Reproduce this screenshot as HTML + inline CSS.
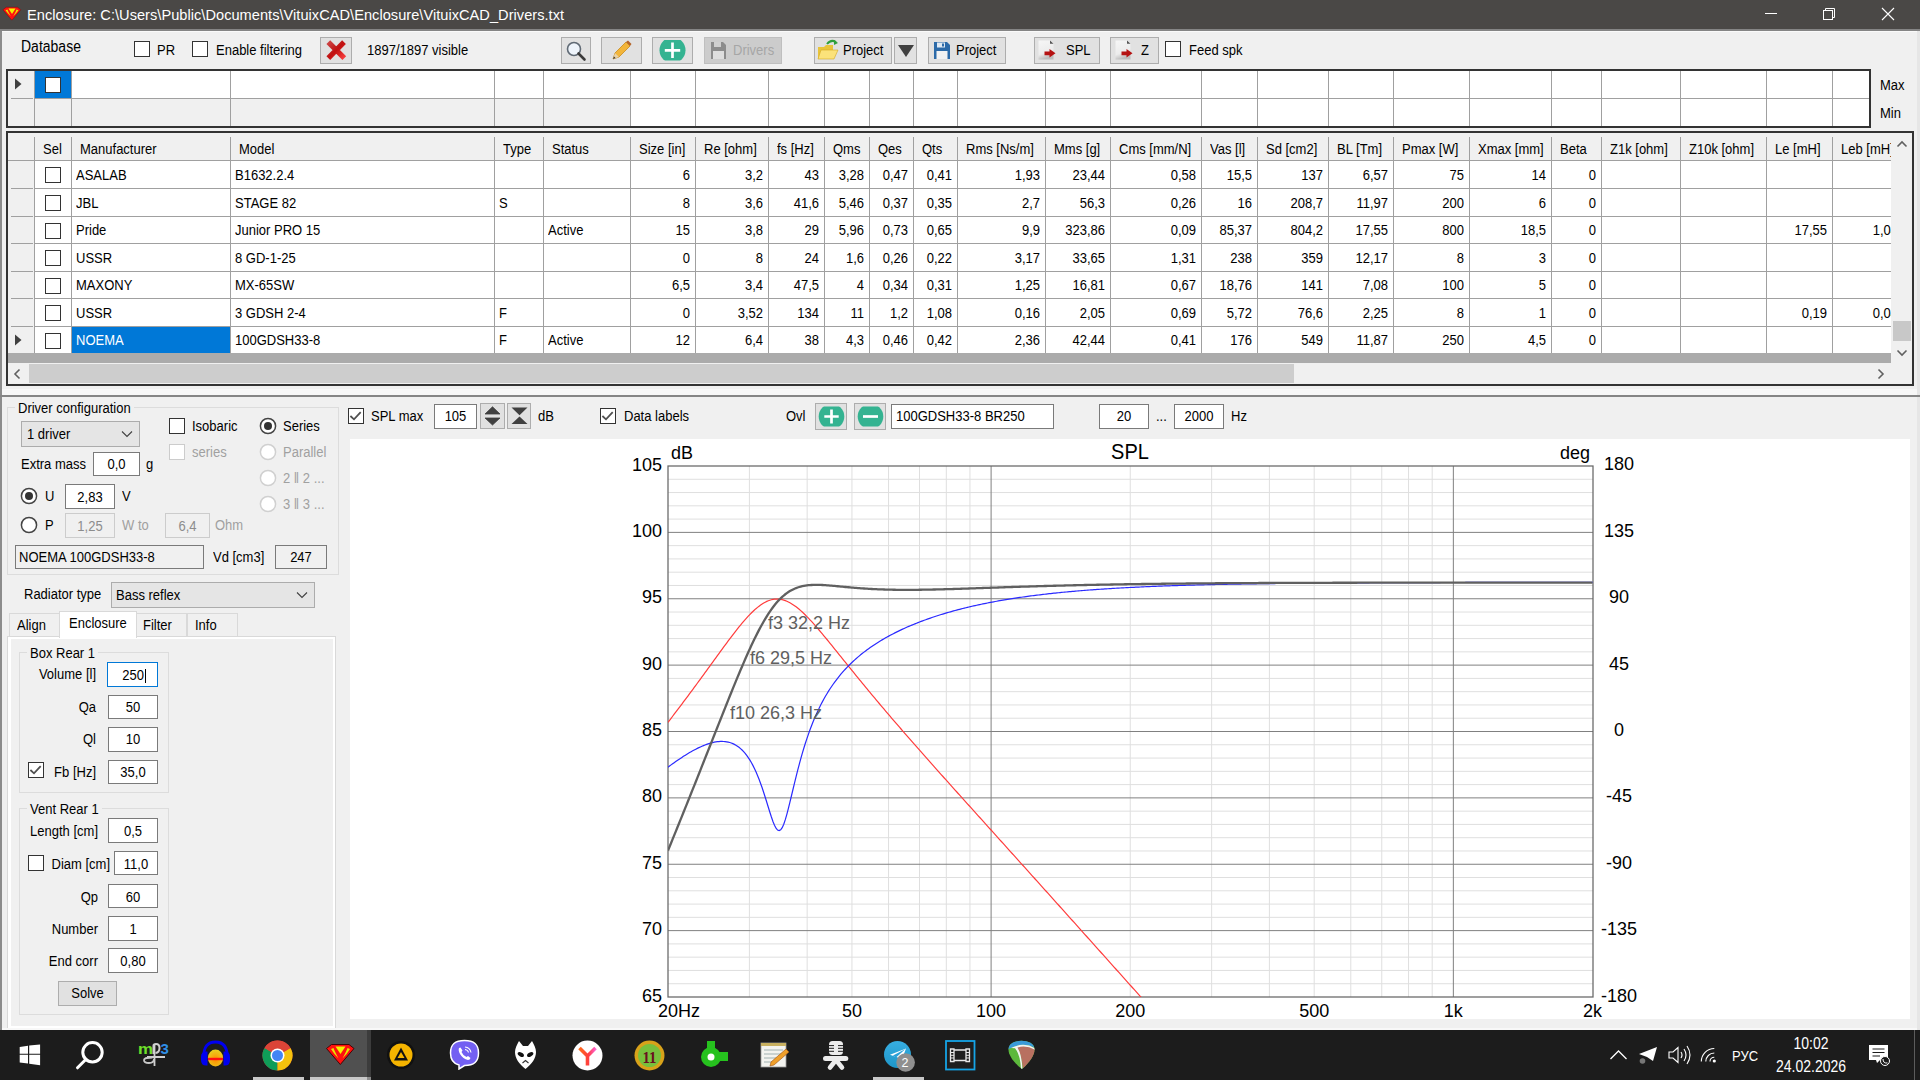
<!DOCTYPE html>
<html><head><meta charset="utf-8"><style>
html,body{margin:0;padding:0;width:1920px;height:1080px;overflow:hidden;background:#f0f0f0;}
.r{position:absolute;box-sizing:border-box;}
.t{position:absolute;white-space:nowrap;font-family:"Liberation Sans",sans-serif;}
</style></head><body>
<div class="r" style="left:0;top:0;width:1920px;height:29px;background:#4a4846"></div>
<div class="r" style="left:0;top:29px;width:1920px;height:2px;background:#858585"></div>
<svg class="r" style="left:2px;top:6px" width="20" height="16" viewBox="0 0 31 24"><path d="M1.5 5.5 L6.5 1.5 H24 L29 5.5 L15.3 21.5 Z" fill="#ff1010" stroke="#6a0000" stroke-width="0.6" stroke-linejoin="round"/><path d="M10 3.5 H21 L15.5 12 Z" fill="#f2f200"/><path d="M5.5 6 Q9 11 13.5 15.5 Q9.5 8 8.5 5 Z M25.5 6 Q22 11 17.5 15.5 Q21.5 8 22.5 5 Z" fill="#e6e600"/></svg>
<div class="t" style="left:27px;top:8px;font-size:14.6px;line-height:14.6px;color:#ffffff;transform:scaleY(1.02);transform-origin:0 12px;letter-spacing:0.03px">Enclosure: C:\Users\Public\Documents\VituixCAD\Enclosure\VituixCAD_Drivers.txt</div>
<div class="r" style="left:1765px;top:13px;width:12px;height:1px;background:#fff;"></div>
<svg class="r" style="left:1820px;top:5px" width="20" height="20"><rect x="3.5" y="5.5" width="9" height="9" fill="none" stroke="#fff" stroke-width="1"/><path d="M5.5 5.5 V3.5 H14.5 V12.5 H12.5" fill="none" stroke="#fff" stroke-width="1"/></svg>
<svg class="r" style="left:1880px;top:6px" width="16" height="16"><path d="M2 2 L14 14 M14 2 L2 14" stroke="#fff" stroke-width="1.1"/></svg>
<div class="r" style="left:0px;top:31px;width:2px;height:999px;background:#8c8c8c;"></div>
<div class="r" style="left:1917px;top:31px;width:3px;height:999px;background:#e6e6e6;"></div>
<div class="r" style="left:2px;top:31px;width:1915px;height:1px;background:#fafafa;"></div>
<div class="t" style="left:21px;top:40px;font-size:14px;line-height:14px;color:#000;transform:scaleY(1.16);transform-origin:0 12px;">Database</div>
<div class="r" style="left:134px;top:41px;width:16px;height:16px;background:#fff;border:1px solid #333333;"></div>
<div class="t" style="left:157px;top:44px;font-size:13px;line-height:13px;color:#000;transform:scaleY(1.16);transform-origin:0 11px;">PR</div>
<div class="r" style="left:192px;top:41px;width:16px;height:16px;background:#fff;border:1px solid #333333;"></div>
<div class="t" style="left:216px;top:44px;font-size:13px;line-height:13px;color:#000;transform:scaleY(1.16);transform-origin:0 11px;">Enable filtering</div>
<div class="r" style="left:320px;top:37px;width:32px;height:27px;background:#e1e1e1;border:1px solid #adadad;"></div>
<svg class="r" style="left:320px;top:37px" width="32" height="27"><defs><linearGradient id="xg" x1="0" y1="0" x2="1" y2="1"><stop offset="0" stop-color="#cc4444"/><stop offset="0.5" stop-color="#c01010"/><stop offset="1" stop-color="#f84040"/></linearGradient></defs><path d="M8.3 5.2 L24.3 21.1 M24 5.2 L8.3 21.1" stroke="url(#xg)" stroke-width="5.3"/></svg>
<div class="t" style="left:367px;top:44px;font-size:13px;line-height:13px;color:#000;transform:scaleY(1.16);transform-origin:0 11px;">1897/1897 visible</div>
<div class="r" style="left:561px;top:37px;width:30px;height:27px;background:#e1e1e1;border:1px solid #adadad;"></div>
<svg class="r" style="left:565px;top:40px" width="22" height="22"><circle cx="9" cy="9" r="6.5" fill="#eef4fb" stroke="#606a75" stroke-width="1.6"/><path d="M13.5 13.5 L19.5 19.5" stroke="#3a3a3a" stroke-width="2.6" stroke-linecap="round"/></svg>
<div class="r" style="left:601px;top:37px;width:41px;height:27px;background:#e1e1e1;border:1px solid #adadad;"></div>
<svg class="r" style="left:609px;top:39px" width="24" height="24"><path d="M4 20 L6 14 L17 3 L21 7 L10 18 Z" fill="#f2b53a" stroke="#c98a1c" stroke-width="0.8"/><path d="M17 3 L19 1.5 L22.5 5 L21 7 Z" fill="#b5652a"/><path d="M4 20 L6 14 L10 18 Z" fill="#e8d2a8"/><path d="M4 20 L5 17.5 L6.5 19 Z" fill="#333"/></svg>
<div class="r" style="left:652px;top:37px;width:41px;height:27px;background:#e1e1e1;border:1px solid #adadad;"></div>
<svg class="r" style="left:659px;top:40px" width="27" height="21"><defs><clipPath id="pcl"><rect x="0" y="0" width="27" height="20.5"/></clipPath></defs><circle cx="13.5" cy="10.2" r="13" fill="#34b391" clip-path="url(#pcl)"/><path d="M13.5 2.6 V18 M5.8 10.3 H21.2" stroke="#fff" stroke-width="2.7"/></svg>
<div class="r" style="left:704px;top:37px;width:78px;height:27px;background:#cccccc;border:1px solid #bfbfbf;"></div>
<svg class="r" style="left:710px;top:41px" width="17" height="19"><path d="M1 1 H13 L16 4 V18 H1 Z" fill="#8c8c8c"/><rect x="4" y="1" width="7" height="5" fill="#cfcfcf"/><rect x="3" y="10" width="11" height="8" fill="#dedede"/></svg>
<div class="t" style="left:733px;top:44px;font-size:13px;line-height:13px;color:#a6a6a6;transform:scaleY(1.16);transform-origin:0 11px;">Drivers</div>
<div class="r" style="left:814px;top:37px;width:78px;height:27px;background:#e1e1e1;border:1px solid #adadad;"></div>
<svg class="r" style="left:816px;top:39px" width="24" height="22"><path d="M2 8 H8 L10 6 H17 V20 H2 Z" fill="#e8c43a"/><path d="M2 20 L5 11 H22 L18 20 Z" fill="#fbe27a" stroke="#d4a820" stroke-width="0.6"/><path d="M11 5 Q15 0 20 3" fill="none" stroke="#2f9e3a" stroke-width="2"/><path d="M18 1 L22 4 L18 6 Z" fill="#2f9e3a"/></svg>
<div class="t" style="left:843px;top:44px;font-size:13px;line-height:13px;color:#000;transform:scaleY(1.16);transform-origin:0 11px;">Project</div>
<div class="r" style="left:894px;top:37px;width:23px;height:27px;background:#e1e1e1;border:1px solid #adadad;"></div>
<svg class="r" style="left:897px;top:44px" width="18" height="14"><path d="M1 1 H17 L9 13 Z" fill="#404040"/></svg>
<div class="r" style="left:928px;top:37px;width:78px;height:27px;background:#e1e1e1;border:1px solid #adadad;"></div>
<svg class="r" style="left:933px;top:41px" width="18" height="19"><path d="M1 1 H14 L17 4 V18 H1 Z" fill="#2c6aa8"/><rect x="4" y="1.5" width="8" height="5" fill="#dfe9f3"/><rect x="9" y="2.5" width="2" height="3" fill="#2c6aa8"/><rect x="3.5" y="10" width="11" height="8" fill="#f2f2f2"/></svg>
<div class="t" style="left:956px;top:44px;font-size:13px;line-height:13px;color:#000;transform:scaleY(1.16);transform-origin:0 11px;">Project</div>
<div class="r" style="left:1034px;top:37px;width:66px;height:27px;background:#e1e1e1;border:1px solid #adadad;"></div>
<svg class="r" style="left:1038px;top:40px" width="20" height="21"><defs><linearGradient id="pg1" x1="0" y1="0" x2="0.3" y2="1"><stop offset="0" stop-color="#f6f6f6"/><stop offset="0.7" stop-color="#ececec"/><stop offset="1" stop-color="#bdbdbd"/></linearGradient></defs><path d="M0.5 0.5 H12.5 L15.5 3.5 V19.5 H0.5 Z" fill="url(#pg1)"/><path d="M12 0.5 L15.5 3.8 H12 Z" fill="#555"/><path d="M6.5 11.5 H11.5 V9 L17.5 13.3 L11.5 17.6 V15.2 H6.5 Z" fill="#b51212"/></svg>
<div class="t" style="left:1066px;top:44px;font-size:13px;line-height:13px;color:#000;transform:scaleY(1.16);transform-origin:0 11px;">SPL</div>
<div class="r" style="left:1110px;top:37px;width:49px;height:27px;background:#e1e1e1;border:1px solid #adadad;"></div>
<svg class="r" style="left:1115px;top:40px" width="20" height="21"><defs><linearGradient id="pg2" x1="0" y1="0" x2="0.3" y2="1"><stop offset="0" stop-color="#f6f6f6"/><stop offset="0.7" stop-color="#ececec"/><stop offset="1" stop-color="#bdbdbd"/></linearGradient></defs><path d="M0.5 0.5 H12.5 L15.5 3.5 V19.5 H0.5 Z" fill="url(#pg2)"/><path d="M12 0.5 L15.5 3.8 H12 Z" fill="#555"/><path d="M6.5 11.5 H11.5 V9 L17.5 13.3 L11.5 17.6 V15.2 H6.5 Z" fill="#b51212"/></svg>
<div class="t" style="left:1141px;top:44px;font-size:13px;line-height:13px;color:#000;transform:scaleY(1.16);transform-origin:0 11px;">Z</div>
<div class="r" style="left:1165px;top:41px;width:16px;height:16px;background:#fff;border:1px solid #333333;"></div>
<div class="t" style="left:1189px;top:44px;font-size:13px;line-height:13px;color:#000;transform:scaleY(1.16);transform-origin:0 11px;">Feed spk</div>
<div class="r" style="left:6px;top:69px;width:1865px;height:59px;background:#ffffff;border:2px solid #333;"></div>
<div class="r" style="left:8px;top:71px;width:26px;height:55px;background:#f0f0f0;"></div>
<div class="r" style="left:35px;top:99px;width:595px;height:27px;background:#f0f0f0;"></div>
<div class="r" style="left:35px;top:71px;width:36px;height:27px;background:#0078d7;"></div>
<div class="r" style="left:34px;top:71px;width:1px;height:55px;background:#a0a0a0;"></div>
<div class="r" style="left:71px;top:71px;width:1px;height:55px;background:#a0a0a0;"></div>
<div class="r" style="left:230px;top:71px;width:1px;height:55px;background:#a0a0a0;"></div>
<div class="r" style="left:494px;top:71px;width:1px;height:55px;background:#a0a0a0;"></div>
<div class="r" style="left:543px;top:71px;width:1px;height:55px;background:#a0a0a0;"></div>
<div class="r" style="left:630px;top:71px;width:1px;height:55px;background:#a0a0a0;"></div>
<div class="r" style="left:695px;top:71px;width:1px;height:55px;background:#a0a0a0;"></div>
<div class="r" style="left:768px;top:71px;width:1px;height:55px;background:#a0a0a0;"></div>
<div class="r" style="left:824px;top:71px;width:1px;height:55px;background:#a0a0a0;"></div>
<div class="r" style="left:869px;top:71px;width:1px;height:55px;background:#a0a0a0;"></div>
<div class="r" style="left:913px;top:71px;width:1px;height:55px;background:#a0a0a0;"></div>
<div class="r" style="left:957px;top:71px;width:1px;height:55px;background:#a0a0a0;"></div>
<div class="r" style="left:1045px;top:71px;width:1px;height:55px;background:#a0a0a0;"></div>
<div class="r" style="left:1110px;top:71px;width:1px;height:55px;background:#a0a0a0;"></div>
<div class="r" style="left:1201px;top:71px;width:1px;height:55px;background:#a0a0a0;"></div>
<div class="r" style="left:1257px;top:71px;width:1px;height:55px;background:#a0a0a0;"></div>
<div class="r" style="left:1328px;top:71px;width:1px;height:55px;background:#a0a0a0;"></div>
<div class="r" style="left:1393px;top:71px;width:1px;height:55px;background:#a0a0a0;"></div>
<div class="r" style="left:1469px;top:71px;width:1px;height:55px;background:#a0a0a0;"></div>
<div class="r" style="left:1551px;top:71px;width:1px;height:55px;background:#a0a0a0;"></div>
<div class="r" style="left:1601px;top:71px;width:1px;height:55px;background:#a0a0a0;"></div>
<div class="r" style="left:1680px;top:71px;width:1px;height:55px;background:#a0a0a0;"></div>
<div class="r" style="left:1766px;top:71px;width:1px;height:55px;background:#a0a0a0;"></div>
<div class="r" style="left:1832px;top:71px;width:1px;height:55px;background:#a0a0a0;"></div>
<div class="r" style="left:35px;top:98px;width:1834px;height:1px;background:#a0a0a0;"></div>
<div class="r" style="left:11px;top:98px;width:22px;height:1px;background:#a0a0a0;"></div>
<svg class="r" style="left:14px;top:78px" width="9" height="13"><path d="M1 0.5 L7.5 6 L1 11.5 Z" fill="#404040"/></svg>
<div class="r" style="left:45px;top:77px;width:16px;height:16px;background:#fff;border:1px solid #333333;"></div>
<div class="t" style="left:1880px;top:79px;font-size:13px;line-height:13px;color:#000;transform:scaleY(1.16);transform-origin:0 11px;">Max</div>
<div class="t" style="left:1880px;top:107px;font-size:13px;line-height:13px;color:#000;transform:scaleY(1.16);transform-origin:0 11px;">Min</div>
<div class="r" style="left:6px;top:131px;width:1908px;height:255px;background:#ffffff;border:2px solid #333;"></div>
<div class="r" style="left:8px;top:133px;width:1883px;height:27px;background:#f0f0f0;"></div>
<div class="r" style="left:8px;top:161px;width:26px;height:192px;background:#f0f0f0;"></div>
<div class="r" style="left:8px;top:160px;width:1883px;height:1px;background:#a0a0a0;"></div>
<div class="r" style="left:72px;top:327px;width:158px;height:26px;background:#0078d7;"></div>
<div class="r" style="left:35px;top:188px;width:1856px;height:1px;background:#a0a0a0;"></div>
<div class="r" style="left:11px;top:188px;width:22px;height:1px;background:#a0a0a0;"></div>
<div class="r" style="left:35px;top:216px;width:1856px;height:1px;background:#a0a0a0;"></div>
<div class="r" style="left:11px;top:216px;width:22px;height:1px;background:#a0a0a0;"></div>
<div class="r" style="left:35px;top:243px;width:1856px;height:1px;background:#a0a0a0;"></div>
<div class="r" style="left:11px;top:243px;width:22px;height:1px;background:#a0a0a0;"></div>
<div class="r" style="left:35px;top:271px;width:1856px;height:1px;background:#a0a0a0;"></div>
<div class="r" style="left:11px;top:271px;width:22px;height:1px;background:#a0a0a0;"></div>
<div class="r" style="left:35px;top:298px;width:1856px;height:1px;background:#a0a0a0;"></div>
<div class="r" style="left:11px;top:298px;width:22px;height:1px;background:#a0a0a0;"></div>
<div class="r" style="left:35px;top:326px;width:1856px;height:1px;background:#a0a0a0;"></div>
<div class="r" style="left:11px;top:326px;width:22px;height:1px;background:#a0a0a0;"></div>
<div class="r" style="left:34px;top:137px;width:1px;height:23px;background:#a0a0a0;"></div>
<div class="r" style="left:34px;top:161px;width:1px;height:192px;background:#a0a0a0;"></div>
<div class="r" style="left:71px;top:137px;width:1px;height:23px;background:#a0a0a0;"></div>
<div class="r" style="left:71px;top:161px;width:1px;height:192px;background:#a0a0a0;"></div>
<div class="r" style="left:230px;top:137px;width:1px;height:23px;background:#a0a0a0;"></div>
<div class="r" style="left:230px;top:161px;width:1px;height:192px;background:#a0a0a0;"></div>
<div class="r" style="left:494px;top:137px;width:1px;height:23px;background:#a0a0a0;"></div>
<div class="r" style="left:494px;top:161px;width:1px;height:192px;background:#a0a0a0;"></div>
<div class="r" style="left:543px;top:137px;width:1px;height:23px;background:#a0a0a0;"></div>
<div class="r" style="left:543px;top:161px;width:1px;height:192px;background:#a0a0a0;"></div>
<div class="r" style="left:630px;top:137px;width:1px;height:23px;background:#a0a0a0;"></div>
<div class="r" style="left:630px;top:161px;width:1px;height:192px;background:#a0a0a0;"></div>
<div class="r" style="left:695px;top:137px;width:1px;height:23px;background:#a0a0a0;"></div>
<div class="r" style="left:695px;top:161px;width:1px;height:192px;background:#a0a0a0;"></div>
<div class="r" style="left:768px;top:137px;width:1px;height:23px;background:#a0a0a0;"></div>
<div class="r" style="left:768px;top:161px;width:1px;height:192px;background:#a0a0a0;"></div>
<div class="r" style="left:824px;top:137px;width:1px;height:23px;background:#a0a0a0;"></div>
<div class="r" style="left:824px;top:161px;width:1px;height:192px;background:#a0a0a0;"></div>
<div class="r" style="left:869px;top:137px;width:1px;height:23px;background:#a0a0a0;"></div>
<div class="r" style="left:869px;top:161px;width:1px;height:192px;background:#a0a0a0;"></div>
<div class="r" style="left:913px;top:137px;width:1px;height:23px;background:#a0a0a0;"></div>
<div class="r" style="left:913px;top:161px;width:1px;height:192px;background:#a0a0a0;"></div>
<div class="r" style="left:957px;top:137px;width:1px;height:23px;background:#a0a0a0;"></div>
<div class="r" style="left:957px;top:161px;width:1px;height:192px;background:#a0a0a0;"></div>
<div class="r" style="left:1045px;top:137px;width:1px;height:23px;background:#a0a0a0;"></div>
<div class="r" style="left:1045px;top:161px;width:1px;height:192px;background:#a0a0a0;"></div>
<div class="r" style="left:1110px;top:137px;width:1px;height:23px;background:#a0a0a0;"></div>
<div class="r" style="left:1110px;top:161px;width:1px;height:192px;background:#a0a0a0;"></div>
<div class="r" style="left:1201px;top:137px;width:1px;height:23px;background:#a0a0a0;"></div>
<div class="r" style="left:1201px;top:161px;width:1px;height:192px;background:#a0a0a0;"></div>
<div class="r" style="left:1257px;top:137px;width:1px;height:23px;background:#a0a0a0;"></div>
<div class="r" style="left:1257px;top:161px;width:1px;height:192px;background:#a0a0a0;"></div>
<div class="r" style="left:1328px;top:137px;width:1px;height:23px;background:#a0a0a0;"></div>
<div class="r" style="left:1328px;top:161px;width:1px;height:192px;background:#a0a0a0;"></div>
<div class="r" style="left:1393px;top:137px;width:1px;height:23px;background:#a0a0a0;"></div>
<div class="r" style="left:1393px;top:161px;width:1px;height:192px;background:#a0a0a0;"></div>
<div class="r" style="left:1469px;top:137px;width:1px;height:23px;background:#a0a0a0;"></div>
<div class="r" style="left:1469px;top:161px;width:1px;height:192px;background:#a0a0a0;"></div>
<div class="r" style="left:1551px;top:137px;width:1px;height:23px;background:#a0a0a0;"></div>
<div class="r" style="left:1551px;top:161px;width:1px;height:192px;background:#a0a0a0;"></div>
<div class="r" style="left:1601px;top:137px;width:1px;height:23px;background:#a0a0a0;"></div>
<div class="r" style="left:1601px;top:161px;width:1px;height:192px;background:#a0a0a0;"></div>
<div class="r" style="left:1680px;top:137px;width:1px;height:23px;background:#a0a0a0;"></div>
<div class="r" style="left:1680px;top:161px;width:1px;height:192px;background:#a0a0a0;"></div>
<div class="r" style="left:1766px;top:137px;width:1px;height:23px;background:#a0a0a0;"></div>
<div class="r" style="left:1766px;top:161px;width:1px;height:192px;background:#a0a0a0;"></div>
<div class="r" style="left:1832px;top:137px;width:1px;height:23px;background:#a0a0a0;"></div>
<div class="r" style="left:1832px;top:161px;width:1px;height:192px;background:#a0a0a0;"></div>
<div class="r" style="left:0px;top:0px;width:1891px;height:361px;overflow:hidden">
<div class="t" style="left:43px;top:143px;font-size:13px;line-height:13px;color:#000;transform:scaleY(1.16);transform-origin:0 11px;">Sel</div>
<div class="t" style="left:80px;top:143px;font-size:13px;line-height:13px;color:#000;transform:scaleY(1.16);transform-origin:0 11px;">Manufacturer</div>
<div class="t" style="left:239px;top:143px;font-size:13px;line-height:13px;color:#000;transform:scaleY(1.16);transform-origin:0 11px;">Model</div>
<div class="t" style="left:503px;top:143px;font-size:13px;line-height:13px;color:#000;transform:scaleY(1.16);transform-origin:0 11px;">Type</div>
<div class="t" style="left:552px;top:143px;font-size:13px;line-height:13px;color:#000;transform:scaleY(1.16);transform-origin:0 11px;">Status</div>
<div class="t" style="left:639px;top:143px;font-size:13px;line-height:13px;color:#000;transform:scaleY(1.16);transform-origin:0 11px;">Size [in]</div>
<div class="t" style="left:704px;top:143px;font-size:13px;line-height:13px;color:#000;transform:scaleY(1.16);transform-origin:0 11px;">Re [ohm]</div>
<div class="t" style="left:777px;top:143px;font-size:13px;line-height:13px;color:#000;transform:scaleY(1.16);transform-origin:0 11px;">fs [Hz]</div>
<div class="t" style="left:833px;top:143px;font-size:13px;line-height:13px;color:#000;transform:scaleY(1.16);transform-origin:0 11px;">Qms</div>
<div class="t" style="left:878px;top:143px;font-size:13px;line-height:13px;color:#000;transform:scaleY(1.16);transform-origin:0 11px;">Qes</div>
<div class="t" style="left:922px;top:143px;font-size:13px;line-height:13px;color:#000;transform:scaleY(1.16);transform-origin:0 11px;">Qts</div>
<div class="t" style="left:966px;top:143px;font-size:13px;line-height:13px;color:#000;transform:scaleY(1.16);transform-origin:0 11px;">Rms [Ns/m]</div>
<div class="t" style="left:1054px;top:143px;font-size:13px;line-height:13px;color:#000;transform:scaleY(1.16);transform-origin:0 11px;">Mms [g]</div>
<div class="t" style="left:1119px;top:143px;font-size:13px;line-height:13px;color:#000;transform:scaleY(1.16);transform-origin:0 11px;">Cms [mm/N]</div>
<div class="t" style="left:1210px;top:143px;font-size:13px;line-height:13px;color:#000;transform:scaleY(1.16);transform-origin:0 11px;">Vas [l]</div>
<div class="t" style="left:1266px;top:143px;font-size:13px;line-height:13px;color:#000;transform:scaleY(1.16);transform-origin:0 11px;">Sd [cm2]</div>
<div class="t" style="left:1337px;top:143px;font-size:13px;line-height:13px;color:#000;transform:scaleY(1.16);transform-origin:0 11px;">BL [Tm]</div>
<div class="t" style="left:1402px;top:143px;font-size:13px;line-height:13px;color:#000;transform:scaleY(1.16);transform-origin:0 11px;">Pmax [W]</div>
<div class="t" style="left:1478px;top:143px;font-size:13px;line-height:13px;color:#000;transform:scaleY(1.16);transform-origin:0 11px;">Xmax [mm]</div>
<div class="t" style="left:1560px;top:143px;font-size:13px;line-height:13px;color:#000;transform:scaleY(1.16);transform-origin:0 11px;">Beta</div>
<div class="t" style="left:1610px;top:143px;font-size:13px;line-height:13px;color:#000;transform:scaleY(1.16);transform-origin:0 11px;">Z1k [ohm]</div>
<div class="t" style="left:1689px;top:143px;font-size:13px;line-height:13px;color:#000;transform:scaleY(1.16);transform-origin:0 11px;">Z10k [ohm]</div>
<div class="t" style="left:1775px;top:143px;font-size:13px;line-height:13px;color:#000;transform:scaleY(1.16);transform-origin:0 11px;">Le [mH]</div>
<div class="t" style="left:1841px;top:143px;font-size:13px;line-height:13px;color:#000;transform:scaleY(1.16);transform-origin:0 11px;">Leb [mH]</div>
<div class="t" style="left:76px;top:169px;font-size:13px;line-height:13px;color:#000;transform:scaleY(1.16);transform-origin:0 11px;">ASALAB</div>
<div class="t" style="left:235px;top:169px;font-size:13px;line-height:13px;color:#000;transform:scaleY(1.16);transform-origin:0 11px;">B1632.2.4</div>
<div class="t" style="left:290px;width:400px;text-align:right;top:169px;font-size:13px;line-height:13px;color:#000;transform:scaleY(1.16);transform-origin:0 11px;">6</div>
<div class="t" style="left:363px;width:400px;text-align:right;top:169px;font-size:13px;line-height:13px;color:#000;transform:scaleY(1.16);transform-origin:0 11px;">3,2</div>
<div class="t" style="left:419px;width:400px;text-align:right;top:169px;font-size:13px;line-height:13px;color:#000;transform:scaleY(1.16);transform-origin:0 11px;">43</div>
<div class="t" style="left:464px;width:400px;text-align:right;top:169px;font-size:13px;line-height:13px;color:#000;transform:scaleY(1.16);transform-origin:0 11px;">3,28</div>
<div class="t" style="left:508px;width:400px;text-align:right;top:169px;font-size:13px;line-height:13px;color:#000;transform:scaleY(1.16);transform-origin:0 11px;">0,47</div>
<div class="t" style="left:552px;width:400px;text-align:right;top:169px;font-size:13px;line-height:13px;color:#000;transform:scaleY(1.16);transform-origin:0 11px;">0,41</div>
<div class="t" style="left:640px;width:400px;text-align:right;top:169px;font-size:13px;line-height:13px;color:#000;transform:scaleY(1.16);transform-origin:0 11px;">1,93</div>
<div class="t" style="left:705px;width:400px;text-align:right;top:169px;font-size:13px;line-height:13px;color:#000;transform:scaleY(1.16);transform-origin:0 11px;">23,44</div>
<div class="t" style="left:796px;width:400px;text-align:right;top:169px;font-size:13px;line-height:13px;color:#000;transform:scaleY(1.16);transform-origin:0 11px;">0,58</div>
<div class="t" style="left:852px;width:400px;text-align:right;top:169px;font-size:13px;line-height:13px;color:#000;transform:scaleY(1.16);transform-origin:0 11px;">15,5</div>
<div class="t" style="left:923px;width:400px;text-align:right;top:169px;font-size:13px;line-height:13px;color:#000;transform:scaleY(1.16);transform-origin:0 11px;">137</div>
<div class="t" style="left:988px;width:400px;text-align:right;top:169px;font-size:13px;line-height:13px;color:#000;transform:scaleY(1.16);transform-origin:0 11px;">6,57</div>
<div class="t" style="left:1064px;width:400px;text-align:right;top:169px;font-size:13px;line-height:13px;color:#000;transform:scaleY(1.16);transform-origin:0 11px;">75</div>
<div class="t" style="left:1146px;width:400px;text-align:right;top:169px;font-size:13px;line-height:13px;color:#000;transform:scaleY(1.16);transform-origin:0 11px;">14</div>
<div class="t" style="left:1196px;width:400px;text-align:right;top:169px;font-size:13px;line-height:13px;color:#000;transform:scaleY(1.16);transform-origin:0 11px;">0</div>
<div class="t" style="left:76px;top:197px;font-size:13px;line-height:13px;color:#000;transform:scaleY(1.16);transform-origin:0 11px;">JBL</div>
<div class="t" style="left:235px;top:197px;font-size:13px;line-height:13px;color:#000;transform:scaleY(1.16);transform-origin:0 11px;">STAGE 82</div>
<div class="t" style="left:499px;top:197px;font-size:13px;line-height:13px;color:#000;transform:scaleY(1.16);transform-origin:0 11px;">S</div>
<div class="t" style="left:290px;width:400px;text-align:right;top:197px;font-size:13px;line-height:13px;color:#000;transform:scaleY(1.16);transform-origin:0 11px;">8</div>
<div class="t" style="left:363px;width:400px;text-align:right;top:197px;font-size:13px;line-height:13px;color:#000;transform:scaleY(1.16);transform-origin:0 11px;">3,6</div>
<div class="t" style="left:419px;width:400px;text-align:right;top:197px;font-size:13px;line-height:13px;color:#000;transform:scaleY(1.16);transform-origin:0 11px;">41,6</div>
<div class="t" style="left:464px;width:400px;text-align:right;top:197px;font-size:13px;line-height:13px;color:#000;transform:scaleY(1.16);transform-origin:0 11px;">5,46</div>
<div class="t" style="left:508px;width:400px;text-align:right;top:197px;font-size:13px;line-height:13px;color:#000;transform:scaleY(1.16);transform-origin:0 11px;">0,37</div>
<div class="t" style="left:552px;width:400px;text-align:right;top:197px;font-size:13px;line-height:13px;color:#000;transform:scaleY(1.16);transform-origin:0 11px;">0,35</div>
<div class="t" style="left:640px;width:400px;text-align:right;top:197px;font-size:13px;line-height:13px;color:#000;transform:scaleY(1.16);transform-origin:0 11px;">2,7</div>
<div class="t" style="left:705px;width:400px;text-align:right;top:197px;font-size:13px;line-height:13px;color:#000;transform:scaleY(1.16);transform-origin:0 11px;">56,3</div>
<div class="t" style="left:796px;width:400px;text-align:right;top:197px;font-size:13px;line-height:13px;color:#000;transform:scaleY(1.16);transform-origin:0 11px;">0,26</div>
<div class="t" style="left:852px;width:400px;text-align:right;top:197px;font-size:13px;line-height:13px;color:#000;transform:scaleY(1.16);transform-origin:0 11px;">16</div>
<div class="t" style="left:923px;width:400px;text-align:right;top:197px;font-size:13px;line-height:13px;color:#000;transform:scaleY(1.16);transform-origin:0 11px;">208,7</div>
<div class="t" style="left:988px;width:400px;text-align:right;top:197px;font-size:13px;line-height:13px;color:#000;transform:scaleY(1.16);transform-origin:0 11px;">11,97</div>
<div class="t" style="left:1064px;width:400px;text-align:right;top:197px;font-size:13px;line-height:13px;color:#000;transform:scaleY(1.16);transform-origin:0 11px;">200</div>
<div class="t" style="left:1146px;width:400px;text-align:right;top:197px;font-size:13px;line-height:13px;color:#000;transform:scaleY(1.16);transform-origin:0 11px;">6</div>
<div class="t" style="left:1196px;width:400px;text-align:right;top:197px;font-size:13px;line-height:13px;color:#000;transform:scaleY(1.16);transform-origin:0 11px;">0</div>
<div class="t" style="left:76px;top:224px;font-size:13px;line-height:13px;color:#000;transform:scaleY(1.16);transform-origin:0 11px;">Pride</div>
<div class="t" style="left:235px;top:224px;font-size:13px;line-height:13px;color:#000;transform:scaleY(1.16);transform-origin:0 11px;">Junior PRO 15</div>
<div class="t" style="left:548px;top:224px;font-size:13px;line-height:13px;color:#000;transform:scaleY(1.16);transform-origin:0 11px;">Active</div>
<div class="t" style="left:290px;width:400px;text-align:right;top:224px;font-size:13px;line-height:13px;color:#000;transform:scaleY(1.16);transform-origin:0 11px;">15</div>
<div class="t" style="left:363px;width:400px;text-align:right;top:224px;font-size:13px;line-height:13px;color:#000;transform:scaleY(1.16);transform-origin:0 11px;">3,8</div>
<div class="t" style="left:419px;width:400px;text-align:right;top:224px;font-size:13px;line-height:13px;color:#000;transform:scaleY(1.16);transform-origin:0 11px;">29</div>
<div class="t" style="left:464px;width:400px;text-align:right;top:224px;font-size:13px;line-height:13px;color:#000;transform:scaleY(1.16);transform-origin:0 11px;">5,96</div>
<div class="t" style="left:508px;width:400px;text-align:right;top:224px;font-size:13px;line-height:13px;color:#000;transform:scaleY(1.16);transform-origin:0 11px;">0,73</div>
<div class="t" style="left:552px;width:400px;text-align:right;top:224px;font-size:13px;line-height:13px;color:#000;transform:scaleY(1.16);transform-origin:0 11px;">0,65</div>
<div class="t" style="left:640px;width:400px;text-align:right;top:224px;font-size:13px;line-height:13px;color:#000;transform:scaleY(1.16);transform-origin:0 11px;">9,9</div>
<div class="t" style="left:705px;width:400px;text-align:right;top:224px;font-size:13px;line-height:13px;color:#000;transform:scaleY(1.16);transform-origin:0 11px;">323,86</div>
<div class="t" style="left:796px;width:400px;text-align:right;top:224px;font-size:13px;line-height:13px;color:#000;transform:scaleY(1.16);transform-origin:0 11px;">0,09</div>
<div class="t" style="left:852px;width:400px;text-align:right;top:224px;font-size:13px;line-height:13px;color:#000;transform:scaleY(1.16);transform-origin:0 11px;">85,37</div>
<div class="t" style="left:923px;width:400px;text-align:right;top:224px;font-size:13px;line-height:13px;color:#000;transform:scaleY(1.16);transform-origin:0 11px;">804,2</div>
<div class="t" style="left:988px;width:400px;text-align:right;top:224px;font-size:13px;line-height:13px;color:#000;transform:scaleY(1.16);transform-origin:0 11px;">17,55</div>
<div class="t" style="left:1064px;width:400px;text-align:right;top:224px;font-size:13px;line-height:13px;color:#000;transform:scaleY(1.16);transform-origin:0 11px;">800</div>
<div class="t" style="left:1146px;width:400px;text-align:right;top:224px;font-size:13px;line-height:13px;color:#000;transform:scaleY(1.16);transform-origin:0 11px;">18,5</div>
<div class="t" style="left:1196px;width:400px;text-align:right;top:224px;font-size:13px;line-height:13px;color:#000;transform:scaleY(1.16);transform-origin:0 11px;">0</div>
<div class="t" style="left:1427px;width:400px;text-align:right;top:224px;font-size:13px;line-height:13px;color:#000;transform:scaleY(1.16);transform-origin:0 11px;">17,55</div>
<div class="t" style="left:1498px;width:400px;text-align:right;top:224px;font-size:13px;line-height:13px;color:#000;transform:scaleY(1.16);transform-origin:0 11px;">1,04</div>
<div class="t" style="left:76px;top:252px;font-size:13px;line-height:13px;color:#000;transform:scaleY(1.16);transform-origin:0 11px;">USSR</div>
<div class="t" style="left:235px;top:252px;font-size:13px;line-height:13px;color:#000;transform:scaleY(1.16);transform-origin:0 11px;">8 GD-1-25</div>
<div class="t" style="left:290px;width:400px;text-align:right;top:252px;font-size:13px;line-height:13px;color:#000;transform:scaleY(1.16);transform-origin:0 11px;">0</div>
<div class="t" style="left:363px;width:400px;text-align:right;top:252px;font-size:13px;line-height:13px;color:#000;transform:scaleY(1.16);transform-origin:0 11px;">8</div>
<div class="t" style="left:419px;width:400px;text-align:right;top:252px;font-size:13px;line-height:13px;color:#000;transform:scaleY(1.16);transform-origin:0 11px;">24</div>
<div class="t" style="left:464px;width:400px;text-align:right;top:252px;font-size:13px;line-height:13px;color:#000;transform:scaleY(1.16);transform-origin:0 11px;">1,6</div>
<div class="t" style="left:508px;width:400px;text-align:right;top:252px;font-size:13px;line-height:13px;color:#000;transform:scaleY(1.16);transform-origin:0 11px;">0,26</div>
<div class="t" style="left:552px;width:400px;text-align:right;top:252px;font-size:13px;line-height:13px;color:#000;transform:scaleY(1.16);transform-origin:0 11px;">0,22</div>
<div class="t" style="left:640px;width:400px;text-align:right;top:252px;font-size:13px;line-height:13px;color:#000;transform:scaleY(1.16);transform-origin:0 11px;">3,17</div>
<div class="t" style="left:705px;width:400px;text-align:right;top:252px;font-size:13px;line-height:13px;color:#000;transform:scaleY(1.16);transform-origin:0 11px;">33,65</div>
<div class="t" style="left:796px;width:400px;text-align:right;top:252px;font-size:13px;line-height:13px;color:#000;transform:scaleY(1.16);transform-origin:0 11px;">1,31</div>
<div class="t" style="left:852px;width:400px;text-align:right;top:252px;font-size:13px;line-height:13px;color:#000;transform:scaleY(1.16);transform-origin:0 11px;">238</div>
<div class="t" style="left:923px;width:400px;text-align:right;top:252px;font-size:13px;line-height:13px;color:#000;transform:scaleY(1.16);transform-origin:0 11px;">359</div>
<div class="t" style="left:988px;width:400px;text-align:right;top:252px;font-size:13px;line-height:13px;color:#000;transform:scaleY(1.16);transform-origin:0 11px;">12,17</div>
<div class="t" style="left:1064px;width:400px;text-align:right;top:252px;font-size:13px;line-height:13px;color:#000;transform:scaleY(1.16);transform-origin:0 11px;">8</div>
<div class="t" style="left:1146px;width:400px;text-align:right;top:252px;font-size:13px;line-height:13px;color:#000;transform:scaleY(1.16);transform-origin:0 11px;">3</div>
<div class="t" style="left:1196px;width:400px;text-align:right;top:252px;font-size:13px;line-height:13px;color:#000;transform:scaleY(1.16);transform-origin:0 11px;">0</div>
<div class="t" style="left:76px;top:279px;font-size:13px;line-height:13px;color:#000;transform:scaleY(1.16);transform-origin:0 11px;">MAXONY</div>
<div class="t" style="left:235px;top:279px;font-size:13px;line-height:13px;color:#000;transform:scaleY(1.16);transform-origin:0 11px;">MX-65SW</div>
<div class="t" style="left:290px;width:400px;text-align:right;top:279px;font-size:13px;line-height:13px;color:#000;transform:scaleY(1.16);transform-origin:0 11px;">6,5</div>
<div class="t" style="left:363px;width:400px;text-align:right;top:279px;font-size:13px;line-height:13px;color:#000;transform:scaleY(1.16);transform-origin:0 11px;">3,4</div>
<div class="t" style="left:419px;width:400px;text-align:right;top:279px;font-size:13px;line-height:13px;color:#000;transform:scaleY(1.16);transform-origin:0 11px;">47,5</div>
<div class="t" style="left:464px;width:400px;text-align:right;top:279px;font-size:13px;line-height:13px;color:#000;transform:scaleY(1.16);transform-origin:0 11px;">4</div>
<div class="t" style="left:508px;width:400px;text-align:right;top:279px;font-size:13px;line-height:13px;color:#000;transform:scaleY(1.16);transform-origin:0 11px;">0,34</div>
<div class="t" style="left:552px;width:400px;text-align:right;top:279px;font-size:13px;line-height:13px;color:#000;transform:scaleY(1.16);transform-origin:0 11px;">0,31</div>
<div class="t" style="left:640px;width:400px;text-align:right;top:279px;font-size:13px;line-height:13px;color:#000;transform:scaleY(1.16);transform-origin:0 11px;">1,25</div>
<div class="t" style="left:705px;width:400px;text-align:right;top:279px;font-size:13px;line-height:13px;color:#000;transform:scaleY(1.16);transform-origin:0 11px;">16,81</div>
<div class="t" style="left:796px;width:400px;text-align:right;top:279px;font-size:13px;line-height:13px;color:#000;transform:scaleY(1.16);transform-origin:0 11px;">0,67</div>
<div class="t" style="left:852px;width:400px;text-align:right;top:279px;font-size:13px;line-height:13px;color:#000;transform:scaleY(1.16);transform-origin:0 11px;">18,76</div>
<div class="t" style="left:923px;width:400px;text-align:right;top:279px;font-size:13px;line-height:13px;color:#000;transform:scaleY(1.16);transform-origin:0 11px;">141</div>
<div class="t" style="left:988px;width:400px;text-align:right;top:279px;font-size:13px;line-height:13px;color:#000;transform:scaleY(1.16);transform-origin:0 11px;">7,08</div>
<div class="t" style="left:1064px;width:400px;text-align:right;top:279px;font-size:13px;line-height:13px;color:#000;transform:scaleY(1.16);transform-origin:0 11px;">100</div>
<div class="t" style="left:1146px;width:400px;text-align:right;top:279px;font-size:13px;line-height:13px;color:#000;transform:scaleY(1.16);transform-origin:0 11px;">5</div>
<div class="t" style="left:1196px;width:400px;text-align:right;top:279px;font-size:13px;line-height:13px;color:#000;transform:scaleY(1.16);transform-origin:0 11px;">0</div>
<div class="t" style="left:76px;top:307px;font-size:13px;line-height:13px;color:#000;transform:scaleY(1.16);transform-origin:0 11px;">USSR</div>
<div class="t" style="left:235px;top:307px;font-size:13px;line-height:13px;color:#000;transform:scaleY(1.16);transform-origin:0 11px;">3 GDSH 2-4</div>
<div class="t" style="left:499px;top:307px;font-size:13px;line-height:13px;color:#000;transform:scaleY(1.16);transform-origin:0 11px;">F</div>
<div class="t" style="left:290px;width:400px;text-align:right;top:307px;font-size:13px;line-height:13px;color:#000;transform:scaleY(1.16);transform-origin:0 11px;">0</div>
<div class="t" style="left:363px;width:400px;text-align:right;top:307px;font-size:13px;line-height:13px;color:#000;transform:scaleY(1.16);transform-origin:0 11px;">3,52</div>
<div class="t" style="left:419px;width:400px;text-align:right;top:307px;font-size:13px;line-height:13px;color:#000;transform:scaleY(1.16);transform-origin:0 11px;">134</div>
<div class="t" style="left:464px;width:400px;text-align:right;top:307px;font-size:13px;line-height:13px;color:#000;transform:scaleY(1.16);transform-origin:0 11px;">11</div>
<div class="t" style="left:508px;width:400px;text-align:right;top:307px;font-size:13px;line-height:13px;color:#000;transform:scaleY(1.16);transform-origin:0 11px;">1,2</div>
<div class="t" style="left:552px;width:400px;text-align:right;top:307px;font-size:13px;line-height:13px;color:#000;transform:scaleY(1.16);transform-origin:0 11px;">1,08</div>
<div class="t" style="left:640px;width:400px;text-align:right;top:307px;font-size:13px;line-height:13px;color:#000;transform:scaleY(1.16);transform-origin:0 11px;">0,16</div>
<div class="t" style="left:705px;width:400px;text-align:right;top:307px;font-size:13px;line-height:13px;color:#000;transform:scaleY(1.16);transform-origin:0 11px;">2,05</div>
<div class="t" style="left:796px;width:400px;text-align:right;top:307px;font-size:13px;line-height:13px;color:#000;transform:scaleY(1.16);transform-origin:0 11px;">0,69</div>
<div class="t" style="left:852px;width:400px;text-align:right;top:307px;font-size:13px;line-height:13px;color:#000;transform:scaleY(1.16);transform-origin:0 11px;">5,72</div>
<div class="t" style="left:923px;width:400px;text-align:right;top:307px;font-size:13px;line-height:13px;color:#000;transform:scaleY(1.16);transform-origin:0 11px;">76,6</div>
<div class="t" style="left:988px;width:400px;text-align:right;top:307px;font-size:13px;line-height:13px;color:#000;transform:scaleY(1.16);transform-origin:0 11px;">2,25</div>
<div class="t" style="left:1064px;width:400px;text-align:right;top:307px;font-size:13px;line-height:13px;color:#000;transform:scaleY(1.16);transform-origin:0 11px;">8</div>
<div class="t" style="left:1146px;width:400px;text-align:right;top:307px;font-size:13px;line-height:13px;color:#000;transform:scaleY(1.16);transform-origin:0 11px;">1</div>
<div class="t" style="left:1196px;width:400px;text-align:right;top:307px;font-size:13px;line-height:13px;color:#000;transform:scaleY(1.16);transform-origin:0 11px;">0</div>
<div class="t" style="left:1427px;width:400px;text-align:right;top:307px;font-size:13px;line-height:13px;color:#000;transform:scaleY(1.16);transform-origin:0 11px;">0,19</div>
<div class="t" style="left:1498px;width:400px;text-align:right;top:307px;font-size:13px;line-height:13px;color:#000;transform:scaleY(1.16);transform-origin:0 11px;">0,04</div>
<div class="t" style="left:76px;top:334px;font-size:13px;line-height:13px;color:#fff;transform:scaleY(1.16);transform-origin:0 11px;">NOEMA</div>
<div class="t" style="left:235px;top:334px;font-size:13px;line-height:13px;color:#000;transform:scaleY(1.16);transform-origin:0 11px;">100GDSH33-8</div>
<div class="t" style="left:499px;top:334px;font-size:13px;line-height:13px;color:#000;transform:scaleY(1.16);transform-origin:0 11px;">F</div>
<div class="t" style="left:548px;top:334px;font-size:13px;line-height:13px;color:#000;transform:scaleY(1.16);transform-origin:0 11px;">Active</div>
<div class="t" style="left:290px;width:400px;text-align:right;top:334px;font-size:13px;line-height:13px;color:#000;transform:scaleY(1.16);transform-origin:0 11px;">12</div>
<div class="t" style="left:363px;width:400px;text-align:right;top:334px;font-size:13px;line-height:13px;color:#000;transform:scaleY(1.16);transform-origin:0 11px;">6,4</div>
<div class="t" style="left:419px;width:400px;text-align:right;top:334px;font-size:13px;line-height:13px;color:#000;transform:scaleY(1.16);transform-origin:0 11px;">38</div>
<div class="t" style="left:464px;width:400px;text-align:right;top:334px;font-size:13px;line-height:13px;color:#000;transform:scaleY(1.16);transform-origin:0 11px;">4,3</div>
<div class="t" style="left:508px;width:400px;text-align:right;top:334px;font-size:13px;line-height:13px;color:#000;transform:scaleY(1.16);transform-origin:0 11px;">0,46</div>
<div class="t" style="left:552px;width:400px;text-align:right;top:334px;font-size:13px;line-height:13px;color:#000;transform:scaleY(1.16);transform-origin:0 11px;">0,42</div>
<div class="t" style="left:640px;width:400px;text-align:right;top:334px;font-size:13px;line-height:13px;color:#000;transform:scaleY(1.16);transform-origin:0 11px;">2,36</div>
<div class="t" style="left:705px;width:400px;text-align:right;top:334px;font-size:13px;line-height:13px;color:#000;transform:scaleY(1.16);transform-origin:0 11px;">42,44</div>
<div class="t" style="left:796px;width:400px;text-align:right;top:334px;font-size:13px;line-height:13px;color:#000;transform:scaleY(1.16);transform-origin:0 11px;">0,41</div>
<div class="t" style="left:852px;width:400px;text-align:right;top:334px;font-size:13px;line-height:13px;color:#000;transform:scaleY(1.16);transform-origin:0 11px;">176</div>
<div class="t" style="left:923px;width:400px;text-align:right;top:334px;font-size:13px;line-height:13px;color:#000;transform:scaleY(1.16);transform-origin:0 11px;">549</div>
<div class="t" style="left:988px;width:400px;text-align:right;top:334px;font-size:13px;line-height:13px;color:#000;transform:scaleY(1.16);transform-origin:0 11px;">11,87</div>
<div class="t" style="left:1064px;width:400px;text-align:right;top:334px;font-size:13px;line-height:13px;color:#000;transform:scaleY(1.16);transform-origin:0 11px;">250</div>
<div class="t" style="left:1146px;width:400px;text-align:right;top:334px;font-size:13px;line-height:13px;color:#000;transform:scaleY(1.16);transform-origin:0 11px;">4,5</div>
<div class="t" style="left:1196px;width:400px;text-align:right;top:334px;font-size:13px;line-height:13px;color:#000;transform:scaleY(1.16);transform-origin:0 11px;">0</div>
</div>
<div class="r" style="left:45px;top:167px;width:16px;height:16px;background:#fff;border:1px solid #333333;"></div>
<div class="r" style="left:45px;top:195px;width:16px;height:16px;background:#fff;border:1px solid #333333;"></div>
<div class="r" style="left:45px;top:223px;width:16px;height:16px;background:#fff;border:1px solid #333333;"></div>
<div class="r" style="left:45px;top:250px;width:16px;height:16px;background:#fff;border:1px solid #333333;"></div>
<div class="r" style="left:45px;top:278px;width:16px;height:16px;background:#fff;border:1px solid #333333;"></div>
<div class="r" style="left:45px;top:305px;width:16px;height:16px;background:#fff;border:1px solid #333333;"></div>
<div class="r" style="left:45px;top:333px;width:16px;height:16px;background:#fff;border:1px solid #333333;"></div>
<svg class="r" style="left:14px;top:334px" width="9" height="13"><path d="M1 0.5 L7.5 6 L1 11.5 Z" fill="#404040"/></svg>
<div class="r" style="left:1891px;top:133px;width:21px;height:230px;background:#f0f0f0;"></div>
<div class="r" style="left:1893px;top:321px;width:18px;height:20px;background:#c8c8c8;"></div>
<svg class="r" style="left:1896px;top:139px" width="12" height="10"><path d="M1.5 7.5 L6 3 L10.5 7.5" fill="none" stroke="#606060" stroke-width="1.6"/></svg>
<svg class="r" style="left:1896px;top:348px" width="12" height="10"><path d="M1.5 2.5 L6 7 L10.5 2.5" fill="none" stroke="#606060" stroke-width="1.6"/></svg>
<div class="r" style="left:8px;top:353px;width:1883px;height:10px;background:#ababab;"></div>
<div class="r" style="left:8px;top:363px;width:1904px;height:21px;background:#f0f0f0;"></div>
<div class="r" style="left:29px;top:364px;width:1265px;height:19px;background:#cdcdcd;"></div>
<svg class="r" style="left:12px;top:368px" width="10" height="12"><path d="M7.5 1.5 L3 6 L7.5 10.5" fill="none" stroke="#606060" stroke-width="1.6"/></svg>
<svg class="r" style="left:1876px;top:368px" width="10" height="12"><path d="M2.5 1.5 L7 6 L2.5 10.5" fill="none" stroke="#606060" stroke-width="1.6"/></svg>
<div class="r" style="left:2px;top:389px;width:1915px;height:6px;background:#f7f7f7;"></div>
<div class="r" style="left:0px;top:395px;width:1920px;height:2px;background:#858585;"></div>
<div class="r" style="left:7px;top:407px;width:332px;height:168px;border:1px solid #dcdcdc;"></div>
<div class="t" style="left:18px;top:402px;font-size:13px;line-height:13px;color:#000;transform:scaleY(1.16);transform-origin:0 11px;background:#f0f0f0;padding:0 3px;margin-left:-3px">Driver configuration</div>
<div class="r" style="left:21px;top:421px;width:119px;height:26px;background:#e5e5e5;border:1px solid #acacac;"></div>
<div class="t" style="left:27px;top:428px;font-size:13px;line-height:13px;color:#000;transform:scaleY(1.16);transform-origin:0 11px;">1 driver</div>
<svg class="r" style="left:121px;top:430px" width="12" height="8"><path d="M1 1.5 L6 6.5 L11 1.5" fill="none" stroke="#404040" stroke-width="1.1"/></svg>
<div class="t" style="left:21px;top:458px;font-size:13px;line-height:13px;color:#000;transform:scaleY(1.16);transform-origin:0 11px;">Extra mass</div>
<div class="r" style="left:93px;top:452px;width:47px;height:24px;background:#ffffff;border:1px solid #7a7a7a;"></div>
<div class="t" style="left:-83.5px;width:400px;text-align:center;top:458px;font-size:13px;line-height:13px;color:#000;transform:scaleY(1.16);transform-origin:0 11px;">0,0</div>
<div class="t" style="left:146px;top:458px;font-size:13px;line-height:13px;color:#000;transform:scaleY(1.16);transform-origin:0 11px;">g</div>
<svg class="r" style="left:20px;top:487px" width="18" height="18"><circle cx="9" cy="9" r="7.6" fill="#fff" stroke="#444444" stroke-width="1.5"/><circle cx="9" cy="9" r="4" fill="#333"/></svg>
<div class="t" style="left:45px;top:490px;font-size:13px;line-height:13px;color:#000;transform:scaleY(1.16);transform-origin:0 11px;">U</div>
<div class="r" style="left:65px;top:484px;width:50px;height:25px;background:#ffffff;border:1px solid #7a7a7a;"></div>
<div class="t" style="left:-110.0px;width:400px;text-align:center;top:491px;font-size:13px;line-height:13px;color:#000;transform:scaleY(1.16);transform-origin:0 11px;">2,83</div>
<div class="t" style="left:122px;top:490px;font-size:13px;line-height:13px;color:#000;transform:scaleY(1.16);transform-origin:0 11px;">V</div>
<svg class="r" style="left:20px;top:516px" width="18" height="18"><circle cx="9" cy="9" r="7.6" fill="#fff" stroke="#444444" stroke-width="1.5"/></svg>
<div class="t" style="left:45px;top:519px;font-size:13px;line-height:13px;color:#000;transform:scaleY(1.16);transform-origin:0 11px;">P</div>
<div class="r" style="left:65px;top:513px;width:50px;height:25px;background:#f0f0f0;border:1px solid #cccccc;"></div>
<div class="t" style="left:-110.0px;width:400px;text-align:center;top:520px;font-size:13px;line-height:13px;color:#8c8c8c;transform:scaleY(1.16);transform-origin:0 11px;">1,25</div>
<div class="t" style="left:122px;top:519px;font-size:13px;line-height:13px;color:#a0a0a0;transform:scaleY(1.16);transform-origin:0 11px;">W to</div>
<div class="r" style="left:165px;top:513px;width:45px;height:25px;background:#f0f0f0;border:1px solid #cccccc;"></div>
<div class="t" style="left:-12.5px;width:400px;text-align:center;top:520px;font-size:13px;line-height:13px;color:#8c8c8c;transform:scaleY(1.16);transform-origin:0 11px;">6,4</div>
<div class="t" style="left:215px;top:519px;font-size:13px;line-height:13px;color:#a0a0a0;transform:scaleY(1.16);transform-origin:0 11px;">Ohm</div>
<div class="r" style="left:169px;top:418px;width:16px;height:16px;background:#fff;border:1px solid #333333;"></div>
<div class="t" style="left:192px;top:420px;font-size:13px;line-height:13px;color:#000;transform:scaleY(1.16);transform-origin:0 11px;">Isobaric</div>
<div class="r" style="left:169px;top:444px;width:16px;height:16px;background:#fff;border:1px solid #cccccc;"></div>
<div class="t" style="left:192px;top:446px;font-size:13px;line-height:13px;color:#a0a0a0;transform:scaleY(1.16);transform-origin:0 11px;">series</div>
<svg class="r" style="left:259px;top:417px" width="18" height="18"><circle cx="9" cy="9" r="7.6" fill="#fff" stroke="#444444" stroke-width="1.5"/><circle cx="9" cy="9" r="4" fill="#333"/></svg>
<div class="t" style="left:283px;top:420px;font-size:13px;line-height:13px;color:#000;transform:scaleY(1.16);transform-origin:0 11px;">Series</div>
<svg class="r" style="left:259px;top:443px" width="18" height="18"><circle cx="9" cy="9" r="7.6" fill="#fff" stroke="#d0d0d0" stroke-width="1.5"/></svg>
<div class="t" style="left:283px;top:446px;font-size:13px;line-height:13px;color:#a0a0a0;transform:scaleY(1.16);transform-origin:0 11px;">Parallel</div>
<svg class="r" style="left:259px;top:469px" width="18" height="18"><circle cx="9" cy="9" r="7.6" fill="#fff" stroke="#d0d0d0" stroke-width="1.5"/></svg>
<div class="t" style="left:283px;top:472px;font-size:13px;line-height:13px;color:#a0a0a0;transform:scaleY(1.16);transform-origin:0 11px;">2 &#8214; 2 ...</div>
<svg class="r" style="left:259px;top:495px" width="18" height="18"><circle cx="9" cy="9" r="7.6" fill="#fff" stroke="#d0d0d0" stroke-width="1.5"/></svg>
<div class="t" style="left:283px;top:498px;font-size:13px;line-height:13px;color:#a0a0a0;transform:scaleY(1.16);transform-origin:0 11px;">3 &#8214; 3 ...</div>
<div class="r" style="left:15px;top:545px;width:189px;height:24px;background:#f0f0f0;border:1px solid #7a7a7a;"></div>
<div class="t" style="left:19px;top:551px;font-size:13px;line-height:13px;color:#000;transform:scaleY(1.16);transform-origin:0 11px;">NOEMA 100GDSH33-8</div>
<div class="t" style="left:213px;top:551px;font-size:13px;line-height:13px;color:#000;transform:scaleY(1.16);transform-origin:0 11px;">Vd [cm3]</div>
<div class="r" style="left:275px;top:545px;width:52px;height:24px;background:#f0f0f0;border:1px solid #7a7a7a;"></div>
<div class="t" style="left:101.0px;width:400px;text-align:center;top:551px;font-size:13px;line-height:13px;color:#000;transform:scaleY(1.16);transform-origin:0 11px;">247</div>
<div class="t" style="left:24px;top:588px;font-size:13px;line-height:13px;color:#000;transform:scaleY(1.16);transform-origin:0 11px;">Radiator type</div>
<div class="r" style="left:111px;top:582px;width:204px;height:26px;background:#e5e5e5;border:1px solid #acacac;"></div>
<div class="t" style="left:116px;top:589px;font-size:13px;line-height:13px;color:#000;transform:scaleY(1.16);transform-origin:0 11px;">Bass reflex</div>
<svg class="r" style="left:296px;top:591px" width="12" height="8"><path d="M1 1.5 L6 6.5 L11 1.5" fill="none" stroke="#404040" stroke-width="1.1"/></svg>
<div class="r" style="left:7px;top:636px;width:329px;height:393px;background:#ffffff;border:1px solid #d9d9d9;border-bottom:none"></div>
<div class="r" style="left:11px;top:639px;width:322px;height:387px;background:#f0f0f0;"></div>
<div class="r" style="left:9px;top:613px;width:51px;height:24px;background:#f0f0f0;border:1px solid #d9d9d9;"></div>
<div class="r" style="left:136px;top:613px;width:51px;height:24px;background:#f0f0f0;border:1px solid #d9d9d9;"></div>
<div class="r" style="left:187px;top:613px;width:51px;height:24px;background:#f0f0f0;border:1px solid #d9d9d9;"></div>
<div class="r" style="left:59px;top:611px;width:78px;height:27px;background:#ffffff;border:1px solid #d9d9d9;border-bottom:none"></div>
<div class="t" style="left:17px;top:619px;font-size:13px;line-height:13px;color:#000;transform:scaleY(1.16);transform-origin:0 11px;">Align</div>
<div class="t" style="left:69px;top:617px;font-size:13px;line-height:13px;color:#000;transform:scaleY(1.16);transform-origin:0 11px;">Enclosure</div>
<div class="t" style="left:143px;top:619px;font-size:13px;line-height:13px;color:#000;transform:scaleY(1.16);transform-origin:0 11px;">Filter</div>
<div class="t" style="left:195px;top:619px;font-size:13px;line-height:13px;color:#000;transform:scaleY(1.16);transform-origin:0 11px;">Info</div>
<div class="r" style="left:19px;top:652px;width:150px;height:141px;border:1px solid #dcdcdc;"></div>
<div class="t" style="left:30px;top:647px;font-size:13px;line-height:13px;color:#000;transform:scaleY(1.16);transform-origin:0 11px;background:#f0f0f0;padding:0 3px;margin-left:-3px">Box Rear 1</div>
<div class="t" style="left:-304px;width:400px;text-align:right;top:668px;font-size:13px;line-height:13px;color:#000;transform:scaleY(1.16);transform-origin:0 11px;">Volume [l]</div>
<div class="r" style="left:107px;top:662px;width:51px;height:25px;background:#ffffff;border:1px solid #0078d7;"></div>
<div class="t" style="left:-67.5px;width:400px;text-align:center;top:669px;font-size:13px;line-height:13px;color:#000;transform:scaleY(1.16);transform-origin:0 11px;"></div>
<div class="t" style="left:-256px;width:400px;text-align:right;top:669px;font-size:13px;line-height:13px;color:#000;transform:scaleY(1.16);transform-origin:0 11px;">250</div>
<div class="r" style="left:145px;top:669px;width:1px;height:14px;background:#000;"></div>
<div class="t" style="left:-304px;width:400px;text-align:right;top:701px;font-size:13px;line-height:13px;color:#000;transform:scaleY(1.16);transform-origin:0 11px;">Qa</div>
<div class="r" style="left:108px;top:695px;width:50px;height:24px;background:#ffffff;border:1px solid #7a7a7a;"></div>
<div class="t" style="left:-67.0px;width:400px;text-align:center;top:701px;font-size:13px;line-height:13px;color:#000;transform:scaleY(1.16);transform-origin:0 11px;">50</div>
<div class="t" style="left:-304px;width:400px;text-align:right;top:733px;font-size:13px;line-height:13px;color:#000;transform:scaleY(1.16);transform-origin:0 11px;">Ql</div>
<div class="r" style="left:108px;top:727px;width:50px;height:25px;background:#ffffff;border:1px solid #7a7a7a;"></div>
<div class="t" style="left:-67.0px;width:400px;text-align:center;top:733px;font-size:13px;line-height:13px;color:#000;transform:scaleY(1.16);transform-origin:0 11px;">10</div>
<div class="r" style="left:28px;top:762px;width:16px;height:16px;background:#fff;border:1px solid #333333;"></div>
<svg class="r" style="left:28px;top:762px" width="16" height="16"><path d="M2.4 8 L6 11.3 L12.7 4.2" fill="none" stroke="#505050" stroke-width="1.8"/></svg>
<div class="t" style="left:-304px;width:400px;text-align:right;top:766px;font-size:13px;line-height:13px;color:#000;transform:scaleY(1.16);transform-origin:0 11px;">Fb [Hz]</div>
<div class="r" style="left:108px;top:760px;width:50px;height:24px;background:#ffffff;border:1px solid #7a7a7a;"></div>
<div class="t" style="left:-67.0px;width:400px;text-align:center;top:766px;font-size:13px;line-height:13px;color:#000;transform:scaleY(1.16);transform-origin:0 11px;">35,0</div>
<div class="r" style="left:19px;top:808px;width:150px;height:207px;border:1px solid #dcdcdc;"></div>
<div class="t" style="left:30px;top:803px;font-size:13px;line-height:13px;color:#000;transform:scaleY(1.16);transform-origin:0 11px;background:#f0f0f0;padding:0 3px;margin-left:-3px">Vent Rear 1</div>
<div class="t" style="left:-302px;width:400px;text-align:right;top:825px;font-size:13px;line-height:13px;color:#000;transform:scaleY(1.16);transform-origin:0 11px;">Length [cm]</div>
<div class="r" style="left:108px;top:818px;width:50px;height:25px;background:#ffffff;border:1px solid #7a7a7a;"></div>
<div class="t" style="left:-67.0px;width:400px;text-align:center;top:825px;font-size:13px;line-height:13px;color:#000;transform:scaleY(1.16);transform-origin:0 11px;">0,5</div>
<div class="r" style="left:28px;top:855px;width:16px;height:16px;background:#fff;border:1px solid #333333;"></div>
<div class="t" style="left:-290px;width:400px;text-align:right;top:858px;font-size:13px;line-height:13px;color:#000;transform:scaleY(1.16);transform-origin:0 11px;">Diam [cm]</div>
<div class="r" style="left:114px;top:851px;width:44px;height:24px;background:#ffffff;border:1px solid #7a7a7a;"></div>
<div class="t" style="left:-64.0px;width:400px;text-align:center;top:858px;font-size:13px;line-height:13px;color:#000;transform:scaleY(1.16);transform-origin:0 11px;">11,0</div>
<div class="t" style="left:-302px;width:400px;text-align:right;top:891px;font-size:13px;line-height:13px;color:#000;transform:scaleY(1.16);transform-origin:0 11px;">Qp</div>
<div class="r" style="left:108px;top:884px;width:50px;height:24px;background:#ffffff;border:1px solid #7a7a7a;"></div>
<div class="t" style="left:-67.0px;width:400px;text-align:center;top:891px;font-size:13px;line-height:13px;color:#000;transform:scaleY(1.16);transform-origin:0 11px;">60</div>
<div class="t" style="left:-302px;width:400px;text-align:right;top:923px;font-size:13px;line-height:13px;color:#000;transform:scaleY(1.16);transform-origin:0 11px;">Number</div>
<div class="r" style="left:108px;top:916px;width:50px;height:25px;background:#ffffff;border:1px solid #7a7a7a;"></div>
<div class="t" style="left:-67.0px;width:400px;text-align:center;top:923px;font-size:13px;line-height:13px;color:#000;transform:scaleY(1.16);transform-origin:0 11px;">1</div>
<div class="t" style="left:-302px;width:400px;text-align:right;top:955px;font-size:13px;line-height:13px;color:#000;transform:scaleY(1.16);transform-origin:0 11px;">End corr</div>
<div class="r" style="left:108px;top:948px;width:50px;height:25px;background:#ffffff;border:1px solid #7a7a7a;"></div>
<div class="t" style="left:-67.0px;width:400px;text-align:center;top:955px;font-size:13px;line-height:13px;color:#000;transform:scaleY(1.16);transform-origin:0 11px;">0,80</div>
<div class="r" style="left:58px;top:981px;width:59px;height:25px;background:#e1e1e1;border:1px solid #adadad;"></div>
<div class="t" style="left:-112.5px;width:400px;text-align:center;top:987px;font-size:13px;line-height:13px;color:#000;transform:scaleY(1.16);transform-origin:0 11px;">Solve</div>
<div class="r" style="left:348px;top:408px;width:16px;height:16px;background:#fff;border:1px solid #333333;"></div>
<svg class="r" style="left:348px;top:408px" width="16" height="16"><path d="M2.4 8 L6 11.3 L12.7 4.2" fill="none" stroke="#505050" stroke-width="1.8"/></svg>
<div class="t" style="left:371px;top:410px;font-size:13px;line-height:13px;color:#000;transform:scaleY(1.16);transform-origin:0 11px;">SPL max</div>
<div class="r" style="left:434px;top:404px;width:43px;height:25px;background:#ffffff;border:1px solid #7a7a7a;"></div>
<div class="t" style="left:255.5px;width:400px;text-align:center;top:410px;font-size:13px;line-height:13px;color:#000;transform:scaleY(1.16);transform-origin:0 11px;">105</div>
<div class="r" style="left:480px;top:403px;width:25px;height:26px;background:#e1e1e1;border:1px solid #adadad;"></div>
<svg class="r" style="left:483px;top:405px" width="19" height="21"><path d="M2 9 L9.5 1.8 L17 9 Z M2 13 L9.5 20 L17 13 Z" fill="#404040" stroke="#404040" stroke-width="0.8" stroke-linejoin="round"/></svg>
<div class="r" style="left:507px;top:403px;width:24px;height:26px;background:#e1e1e1;border:1px solid #adadad;"></div>
<svg class="r" style="left:510px;top:405px" width="19" height="21"><path d="M1.5 2.5 H17.5 L9.5 10.3 Z M1.5 19 H17.5 L9.5 11.6 Z" fill="#404040"/></svg>
<div class="t" style="left:538px;top:410px;font-size:13px;line-height:13px;color:#000;transform:scaleY(1.16);transform-origin:0 11px;">dB</div>
<div class="r" style="left:600px;top:408px;width:16px;height:16px;background:#fff;border:1px solid #333333;"></div>
<svg class="r" style="left:600px;top:408px" width="16" height="16"><path d="M2.4 8 L6 11.3 L12.7 4.2" fill="none" stroke="#505050" stroke-width="1.8"/></svg>
<div class="t" style="left:624px;top:410px;font-size:13px;line-height:13px;color:#000;transform:scaleY(1.16);transform-origin:0 11px;">Data labels</div>
<div class="t" style="left:786px;top:410px;font-size:13px;line-height:13px;color:#000;transform:scaleY(1.16);transform-origin:0 11px;">Ovl</div>
<div class="r" style="left:815px;top:403px;width:32px;height:27px;background:#e1e1e1;border:1px solid #adadad;"></div>
<svg class="r" style="left:818px;top:406px" width="27" height="21"><defs><clipPath id="pcl2"><rect x="0" y="0.5" width="27" height="20"/></clipPath></defs><circle cx="13.5" cy="10.5" r="12.8" fill="#34b391" clip-path="url(#pcl2)"/><path d="M13.5 3.5 V17.5 M6.3 10.5 H20.7" stroke="#fff" stroke-width="2.7"/></svg>
<div class="r" style="left:854px;top:403px;width:32px;height:27px;background:#e1e1e1;border:1px solid #adadad;"></div>
<svg class="r" style="left:857px;top:406px" width="27" height="21"><defs><clipPath id="pcl3"><rect x="0" y="0.5" width="27" height="20"/></clipPath></defs><circle cx="13.5" cy="10.5" r="12.8" fill="#34b391" clip-path="url(#pcl3)"/><path d="M6 10.5 H21" stroke="#fff" stroke-width="2.7"/></svg>
<div class="r" style="left:891px;top:404px;width:163px;height:25px;background:#ffffff;border:1px solid #7a7a7a;"></div>
<div class="t" style="left:896px;top:410px;font-size:13px;line-height:13px;color:#000;transform:scaleY(1.16);transform-origin:0 11px;">100GDSH33-8 BR250</div>
<div class="r" style="left:1099px;top:404px;width:50px;height:25px;background:#ffffff;border:1px solid #7a7a7a;"></div>
<div class="t" style="left:924.0px;width:400px;text-align:center;top:410px;font-size:13px;line-height:13px;color:#000;transform:scaleY(1.16);transform-origin:0 11px;">20</div>
<div class="t" style="left:1156px;top:410px;font-size:13px;line-height:13px;color:#000;transform:scaleY(1.16);transform-origin:0 11px;">...</div>
<div class="r" style="left:1174px;top:404px;width:50px;height:25px;background:#ffffff;border:1px solid #7a7a7a;"></div>
<div class="t" style="left:999.0px;width:400px;text-align:center;top:410px;font-size:13px;line-height:13px;color:#000;transform:scaleY(1.16);transform-origin:0 11px;">2000</div>
<div class="t" style="left:1231px;top:410px;font-size:13px;line-height:13px;color:#000;transform:scaleY(1.16);transform-origin:0 11px;">Hz</div>
<div class="r" style="left:350px;top:439px;width:1560px;height:580px;background:#ffffff;"></div>
<svg class="r" style="left:0;top:0" width="1920" height="1080" viewBox="0 0 1920 1080"><line x1="668" x2="1593" y1="983.73" y2="983.73" stroke="#dfdfdf" stroke-width="1"/><line x1="668" x2="1593" y1="970.45" y2="970.45" stroke="#dfdfdf" stroke-width="1"/><line x1="668" x2="1593" y1="957.17" y2="957.17" stroke="#dfdfdf" stroke-width="1"/><line x1="668" x2="1593" y1="943.90" y2="943.90" stroke="#dfdfdf" stroke-width="1"/><line x1="668" x2="1593" y1="917.35" y2="917.35" stroke="#dfdfdf" stroke-width="1"/><line x1="668" x2="1593" y1="904.08" y2="904.08" stroke="#dfdfdf" stroke-width="1"/><line x1="668" x2="1593" y1="890.80" y2="890.80" stroke="#dfdfdf" stroke-width="1"/><line x1="668" x2="1593" y1="877.53" y2="877.53" stroke="#dfdfdf" stroke-width="1"/><line x1="668" x2="1593" y1="850.98" y2="850.98" stroke="#dfdfdf" stroke-width="1"/><line x1="668" x2="1593" y1="837.70" y2="837.70" stroke="#dfdfdf" stroke-width="1"/><line x1="668" x2="1593" y1="824.42" y2="824.42" stroke="#dfdfdf" stroke-width="1"/><line x1="668" x2="1593" y1="811.15" y2="811.15" stroke="#dfdfdf" stroke-width="1"/><line x1="668" x2="1593" y1="784.60" y2="784.60" stroke="#dfdfdf" stroke-width="1"/><line x1="668" x2="1593" y1="771.33" y2="771.33" stroke="#dfdfdf" stroke-width="1"/><line x1="668" x2="1593" y1="758.05" y2="758.05" stroke="#dfdfdf" stroke-width="1"/><line x1="668" x2="1593" y1="744.78" y2="744.78" stroke="#dfdfdf" stroke-width="1"/><line x1="668" x2="1593" y1="718.23" y2="718.23" stroke="#dfdfdf" stroke-width="1"/><line x1="668" x2="1593" y1="704.95" y2="704.95" stroke="#dfdfdf" stroke-width="1"/><line x1="668" x2="1593" y1="691.67" y2="691.67" stroke="#dfdfdf" stroke-width="1"/><line x1="668" x2="1593" y1="678.40" y2="678.40" stroke="#dfdfdf" stroke-width="1"/><line x1="668" x2="1593" y1="651.85" y2="651.85" stroke="#dfdfdf" stroke-width="1"/><line x1="668" x2="1593" y1="638.58" y2="638.58" stroke="#dfdfdf" stroke-width="1"/><line x1="668" x2="1593" y1="625.30" y2="625.30" stroke="#dfdfdf" stroke-width="1"/><line x1="668" x2="1593" y1="612.02" y2="612.02" stroke="#dfdfdf" stroke-width="1"/><line x1="668" x2="1593" y1="585.48" y2="585.48" stroke="#dfdfdf" stroke-width="1"/><line x1="668" x2="1593" y1="572.20" y2="572.20" stroke="#dfdfdf" stroke-width="1"/><line x1="668" x2="1593" y1="558.92" y2="558.92" stroke="#dfdfdf" stroke-width="1"/><line x1="668" x2="1593" y1="545.65" y2="545.65" stroke="#dfdfdf" stroke-width="1"/><line x1="668" x2="1593" y1="519.10" y2="519.10" stroke="#dfdfdf" stroke-width="1"/><line x1="668" x2="1593" y1="505.82" y2="505.82" stroke="#dfdfdf" stroke-width="1"/><line x1="668" x2="1593" y1="492.55" y2="492.55" stroke="#dfdfdf" stroke-width="1"/><line x1="668" x2="1593" y1="479.27" y2="479.27" stroke="#dfdfdf" stroke-width="1"/><line x1="749.40" x2="749.40" y1="466" y2="997" stroke="#dfdfdf" stroke-width="1"/><line x1="807.15" x2="807.15" y1="466" y2="997" stroke="#dfdfdf" stroke-width="1"/><line x1="851.95" x2="851.95" y1="466" y2="997" stroke="#dfdfdf" stroke-width="1"/><line x1="888.55" x2="888.55" y1="466" y2="997" stroke="#dfdfdf" stroke-width="1"/><line x1="919.50" x2="919.50" y1="466" y2="997" stroke="#dfdfdf" stroke-width="1"/><line x1="946.30" x2="946.30" y1="466" y2="997" stroke="#dfdfdf" stroke-width="1"/><line x1="969.95" x2="969.95" y1="466" y2="997" stroke="#dfdfdf" stroke-width="1"/><line x1="1130.25" x2="1130.25" y1="466" y2="997" stroke="#dfdfdf" stroke-width="1"/><line x1="1211.65" x2="1211.65" y1="466" y2="997" stroke="#dfdfdf" stroke-width="1"/><line x1="1269.40" x2="1269.40" y1="466" y2="997" stroke="#dfdfdf" stroke-width="1"/><line x1="1314.20" x2="1314.20" y1="466" y2="997" stroke="#dfdfdf" stroke-width="1"/><line x1="1350.80" x2="1350.80" y1="466" y2="997" stroke="#dfdfdf" stroke-width="1"/><line x1="1381.75" x2="1381.75" y1="466" y2="997" stroke="#dfdfdf" stroke-width="1"/><line x1="1408.55" x2="1408.55" y1="466" y2="997" stroke="#dfdfdf" stroke-width="1"/><line x1="1432.20" x2="1432.20" y1="466" y2="997" stroke="#dfdfdf" stroke-width="1"/><line x1="668" x2="1593" y1="930.62" y2="930.62" stroke="#808080" stroke-width="1"/><line x1="668" x2="1593" y1="864.25" y2="864.25" stroke="#808080" stroke-width="1"/><line x1="668" x2="1593" y1="797.88" y2="797.88" stroke="#808080" stroke-width="1"/><line x1="668" x2="1593" y1="731.50" y2="731.50" stroke="#808080" stroke-width="1"/><line x1="668" x2="1593" y1="665.12" y2="665.12" stroke="#808080" stroke-width="1"/><line x1="668" x2="1593" y1="598.75" y2="598.75" stroke="#808080" stroke-width="1"/><line x1="668" x2="1593" y1="532.38" y2="532.38" stroke="#808080" stroke-width="1"/><line x1="991.10" x2="991.10" y1="466" y2="997" stroke="#808080" stroke-width="1"/><line x1="1453.35" x2="1453.35" y1="466" y2="997" stroke="#808080" stroke-width="1"/><rect x="668" y="466" width="925" height="531" fill="none" stroke="#666666" stroke-width="1.25"/><clipPath id="pc"><rect x="668" y="466" width="925" height="531"/></clipPath><g clip-path="url(#pc)" fill="none"><path d="M668.00,722.28 L669.54,720.27 L671.09,718.26 L672.63,716.25 L674.17,714.22 L675.72,712.20 L677.26,710.16 L678.80,708.13 L680.35,706.08 L681.89,704.03 L683.43,701.98 L684.98,699.92 L686.52,697.85 L688.06,695.78 L689.61,693.70 L691.15,691.62 L692.69,689.54 L694.24,687.44 L695.78,685.35 L697.32,683.25 L698.87,681.14 L700.41,679.03 L701.95,676.92 L703.50,674.80 L705.04,672.68 L706.59,670.56 L708.13,668.43 L709.67,666.30 L711.22,664.18 L712.76,662.05 L714.30,659.92 L715.85,657.79 L717.39,655.67 L718.93,653.55 L720.48,651.43 L722.02,649.32 L723.56,647.22 L725.11,645.12 L726.65,643.03 L728.19,640.96 L729.74,638.90 L731.28,636.86 L732.82,634.83 L734.37,632.83 L735.91,630.84 L737.45,628.89 L739.00,626.96 L740.54,625.06 L742.08,623.20 L743.63,621.38 L745.17,619.60 L746.71,617.87 L748.26,616.19 L749.80,614.56 L751.34,612.99 L752.89,611.48 L754.43,610.04 L755.97,608.67 L757.52,607.37 L759.06,606.16 L760.60,605.03 L762.15,603.99 L763.69,603.04 L765.23,602.18 L766.78,601.42 L768.32,600.77 L769.86,600.22 L771.41,599.77 L772.95,599.43 L774.49,599.21 L776.04,599.09 L777.58,599.08 L779.13,599.17 L780.67,599.38 L782.21,599.69 L783.76,600.11 L785.30,600.63 L786.84,601.24 L788.39,601.96 L789.93,602.76 L791.47,603.66 L793.02,604.64 L794.56,605.69 L796.10,606.83 L797.65,608.04 L799.19,609.31 L800.73,610.65 L802.28,612.05 L803.82,613.50 L805.36,615.01 L806.91,616.56 L808.45,618.15 L809.99,619.79 L811.54,621.46 L813.08,623.16 L814.62,624.89 L816.17,626.65 L817.71,628.43 L819.25,630.24 L820.80,632.06 L822.34,633.90 L823.88,635.76 L825.43,637.62 L826.97,639.50 L828.51,641.39 L830.06,643.28 L831.60,645.19 L833.14,647.09 L834.69,649.01 L836.23,650.92 L837.77,652.84 L839.32,654.76 L840.86,656.68 L842.40,658.59 L843.95,660.51 L845.49,662.43 L847.04,664.35 L848.58,666.26 L850.12,668.17 L851.67,670.08 L853.21,671.98 L854.75,673.88 L856.30,675.78 L857.84,677.67 L859.38,679.56 L860.93,681.45 L862.47,683.33 L864.01,685.21 L865.56,687.08 L867.10,688.95 L868.64,690.81 L870.19,692.67 L871.73,694.53 L873.27,696.38 L874.82,698.23 L876.36,700.07 L877.90,701.91 L879.45,703.74 L880.99,705.57 L882.53,707.40 L884.08,709.22 L885.62,711.04 L887.16,712.85 L888.71,714.66 L890.25,716.47 L891.79,718.27 L893.34,720.07 L894.88,721.86 L896.42,723.65 L897.97,725.44 L899.51,727.23 L901.05,729.01 L902.60,730.79 L904.14,732.57 L905.68,734.34 L907.23,736.11 L908.77,737.88 L910.31,739.64 L911.86,741.41 L913.40,743.17 L914.94,744.93 L916.49,746.68 L918.03,748.43 L919.58,750.19 L921.12,751.94 L922.66,753.68 L924.21,755.43 L925.75,757.17 L927.29,758.91 L928.84,760.66 L930.38,762.39 L931.92,764.13 L933.47,765.87 L935.01,767.60 L936.55,769.33 L938.10,771.07 L939.64,772.80 L941.18,774.53 L942.73,776.25 L944.27,777.98 L945.81,779.71 L947.36,781.43 L948.90,783.16 L950.44,784.88 L951.99,786.60 L953.53,788.32 L955.07,790.04 L956.62,791.76 L958.16,793.48 L959.70,795.20 L961.25,796.92 L962.79,798.64 L964.33,800.36 L965.88,802.07 L967.42,803.79 L968.96,805.51 L970.51,807.22 L972.05,808.94 L973.59,810.65 L975.14,812.37 L976.68,814.08 L978.22,815.80 L979.77,817.51 L981.31,819.22 L982.85,820.94 L984.40,822.65 L985.94,824.37 L987.48,826.08 L989.03,827.79 L990.57,829.51 L992.12,831.22 L993.66,832.93 L995.20,834.65 L996.75,836.36 L998.29,838.07 L999.83,839.79 L1001.38,841.50 L1002.92,843.21 L1004.46,844.93 L1006.01,846.64 L1007.55,848.35 L1009.09,850.07 L1010.64,851.78 L1012.18,853.50 L1013.72,855.21 L1015.27,856.93 L1016.81,858.64 L1018.35,860.35 L1019.90,862.07 L1021.44,863.79 L1022.98,865.50 L1024.53,867.22 L1026.07,868.93 L1027.61,870.65 L1029.16,872.36 L1030.70,874.08 L1032.24,875.80 L1033.79,877.51 L1035.33,879.23 L1036.87,880.95 L1038.42,882.66 L1039.96,884.38 L1041.50,886.10 L1043.05,887.82 L1044.59,889.54 L1046.13,891.26 L1047.68,892.97 L1049.22,894.69 L1050.76,896.41 L1052.31,898.13 L1053.85,899.85 L1055.39,901.57 L1056.94,903.29 L1058.48,905.01 L1060.03,906.73 L1061.57,908.45 L1063.11,910.17 L1064.66,911.89 L1066.20,913.61 L1067.74,915.34 L1069.29,917.06 L1070.83,918.78 L1072.37,920.50 L1073.92,922.22 L1075.46,923.95 L1077.00,925.67 L1078.55,927.39 L1080.09,929.11 L1081.63,930.84 L1083.18,932.56 L1084.72,934.28 L1086.26,936.01 L1087.81,937.73 L1089.35,939.45 L1090.89,941.18 L1092.44,942.90 L1093.98,944.62 L1095.52,946.35 L1097.07,948.07 L1098.61,949.80 L1100.15,951.52 L1101.70,953.24 L1103.24,954.97 L1104.78,956.69 L1106.33,958.42 L1107.87,960.14 L1109.41,961.87 L1110.96,963.59 L1112.50,965.32 L1114.04,967.04 L1115.59,968.77 L1117.13,970.49 L1118.67,972.21 L1120.22,973.94 L1121.76,975.66 L1123.30,977.39 L1124.85,979.11 L1126.39,980.84 L1127.93,982.56 L1129.48,984.29 L1131.02,986.01 L1132.57,987.73 L1134.11,989.46 L1135.65,991.18 L1137.20,992.91 L1138.74,994.63 L1140.28,996.35 L1141.83,998.08 L1143.37,999.80 L1144.91,1001.52 L1146.46,1003.25 L1148.00,1004.97 L1149.54,1006.69 L1151.09,1008.42 L1152.63,1010.14 L1154.17,1011.86 L1155.72,1013.58 L1157.26,1015.30 L1158.80,1017.03 L1160.35,1018.75 L1161.89,1020.47 L1163.43,1022.19 L1164.98,1023.91 L1166.52,1025.63 L1168.06,1027.35 L1169.61,1029.07 L1171.15,1030.79 L1172.69,1032.51 L1174.24,1034.23 L1175.78,1035.94 L1177.32,1037.66 L1178.87,1039.38 L1180.41,1041.10 L1181.95,1042.81 L1183.50,1044.53 L1185.04,1046.25 L1186.58,1047.96 L1188.13,1049.68 L1189.67,1051.39 L1191.21,1053.11 L1192.76,1054.82 L1194.30,1056.53 L1195.84,1058.25 L1197.39,1059.96 L1198.93,1061.67 L1200.47,1063.38 L1202.02,1065.09 L1203.56,1066.80 L1205.11,1068.51 L1206.65,1070.22 L1208.19,1071.93 L1209.74,1073.64 L1211.28,1075.34 L1212.82,1077.05 L1214.37,1078.76 L1215.91,1080.46 L1217.45,1082.17 L1219.00,1083.87 L1220.54,1085.57 L1222.08,1087.28 L1223.63,1088.98 L1225.17,1090.68 L1226.71,1092.38 L1228.26,1094.08 L1229.80,1095.78 L1231.34,1097.48 L1232.89,1099.17 L1234.43,1100.87 L1235.97,1102.57 L1237.52,1104.26 L1239.06,1105.96 L1240.60,1107.65 L1242.15,1109.34 L1243.69,1111.03 L1245.23,1112.72 L1246.78,1114.41 L1248.32,1116.10 L1249.86,1117.79 L1251.41,1119.47 L1252.95,1121.16 L1254.49,1122.85 L1256.04,1124.53 L1257.58,1126.21 L1259.12,1127.89 L1260.67,1129.57 L1262.21,1131.25 L1263.75,1132.93 L1265.30,1134.61 L1266.84,1136.28 L1268.38,1137.96 L1269.93,1139.63 L1271.47,1141.30 L1273.02,1142.98 L1274.56,1144.65 L1276.10,1146.31 L1277.65,1147.98 L1279.19,1149.65 L1280.73,1151.31 L1282.28,1152.98 L1283.82,1154.64 L1285.36,1156.30 L1286.91,1157.96 L1288.45,1159.62 L1289.99,1161.27 L1291.54,1162.93 L1293.08,1164.58 L1294.62,1166.24 L1296.17,1167.89 L1297.71,1169.54 L1299.25,1171.18 L1300.80,1172.83 L1302.34,1174.48 L1303.88,1176.12 L1305.43,1177.76 L1306.97,1179.40 L1308.51,1181.04 L1310.06,1182.68 L1311.60,1184.31 L1313.14,1185.95 L1314.69,1187.58 L1316.23,1189.21 L1317.77,1190.84 L1319.32,1192.46 L1320.86,1194.09 L1322.40,1195.71 L1323.95,1197.33 L1325.49,1198.95 L1327.03,1200.57 L1328.58,1202.18 L1330.12,1203.80 L1331.66,1205.41 L1333.21,1207.02 L1334.75,1208.63 L1336.29,1210.23 L1337.84,1211.84 L1339.38,1213.44 L1340.92,1215.04 L1342.47,1216.64 L1344.01,1218.23 L1345.56,1219.83 L1347.10,1221.42 L1348.64,1223.01 L1350.19,1224.59 L1351.73,1226.18 L1353.27,1227.76 L1354.82,1229.34 L1356.36,1230.92 L1357.90,1232.50 L1359.45,1234.07 L1360.99,1235.64 L1362.53,1237.21 L1364.08,1238.78 L1365.62,1240.34 L1367.16,1241.90 L1368.71,1243.46 L1370.25,1245.02 L1371.79,1246.57 L1373.34,1248.12 L1374.88,1249.67 L1376.42,1251.22 L1377.97,1252.76 L1379.51,1254.31 L1381.05,1255.85 L1382.60,1257.38 L1384.14,1258.92 L1385.68,1260.45 L1387.23,1261.98 L1388.77,1263.50 L1390.31,1265.02 L1391.86,1266.55 L1393.40,1268.06 L1394.94,1269.58 L1396.49,1271.09 L1398.03,1272.60 L1399.57,1274.11 L1401.12,1275.61 L1402.66,1277.11 L1404.20,1278.61 L1405.75,1280.10 L1407.29,1281.60 L1408.83,1283.09 L1410.38,1284.57 L1411.92,1286.06 L1413.46,1287.54 L1415.01,1289.01 L1416.55,1290.49 L1418.10,1291.96 L1419.64,1293.43 L1421.18,1294.89 L1422.73,1296.36 L1424.27,1297.82 L1425.81,1299.27 L1427.36,1300.72 L1428.90,1302.17 L1430.44,1303.62 L1431.99,1305.07 L1433.53,1306.51 L1435.07,1307.94 L1436.62,1309.38 L1438.16,1310.81 L1439.70,1312.24 L1441.25,1313.66 L1442.79,1315.08 L1444.33,1316.50 L1445.88,1317.91 L1447.42,1319.33 L1448.96,1320.73 L1450.51,1322.14 L1452.05,1323.54 L1453.59,1324.94 L1455.14,1326.33 L1456.68,1327.73 L1458.22,1329.11 L1459.77,1330.50 L1461.31,1331.88 L1462.85,1333.26 L1464.40,1334.63 L1465.94,1336.01 L1467.48,1337.37 L1469.03,1338.74 L1470.57,1340.10 L1472.11,1341.46 L1473.66,1342.81 L1475.20,1344.16 L1476.74,1345.51 L1478.29,1346.86 L1479.83,1348.20 L1481.37,1349.54 L1482.92,1350.87 L1484.46,1352.20 L1486.01,1353.53 L1487.55,1354.85 L1489.09,1356.17 L1490.64,1357.49 L1492.18,1358.81 L1493.72,1360.12 L1495.27,1361.42 L1496.81,1362.73 L1498.35,1364.03 L1499.90,1365.33 L1501.44,1366.62 L1502.98,1367.91 L1504.53,1369.20 L1506.07,1370.48 L1507.61,1371.76 L1509.16,1373.04 L1510.70,1374.31 L1512.24,1375.58 L1513.79,1376.85 L1515.33,1378.11 L1516.87,1379.37 L1518.42,1380.63 L1519.96,1381.88 L1521.50,1383.13 L1523.05,1384.38 L1524.59,1385.62 L1526.13,1386.86 L1527.68,1388.10 L1529.22,1389.34 L1530.76,1390.57 L1532.31,1391.79 L1533.85,1393.02 L1535.39,1394.24 L1536.94,1395.46 L1538.48,1396.67 L1540.02,1397.88 L1541.57,1399.09 L1543.11,1400.30 L1544.65,1401.50 L1546.20,1402.70 L1547.74,1403.89 L1549.28,1405.09 L1550.83,1406.28 L1552.37,1407.46 L1553.91,1408.65 L1555.46,1409.83 L1557.00,1411.01 L1558.55,1412.18 L1560.09,1413.35 L1561.63,1414.52 L1563.18,1415.69 L1564.72,1416.85 L1566.26,1418.01 L1567.81,1419.17 L1569.35,1420.32 L1570.89,1421.47 L1572.44,1422.62 L1573.98,1423.77 L1575.52,1424.91 L1577.07,1426.05 L1578.61,1427.19 L1580.15,1428.32 L1581.70,1429.45 L1583.24,1430.58 L1584.78,1431.71 L1586.33,1432.83 L1587.87,1433.95 L1589.41,1435.07 L1590.96,1436.19 L1592.50,1437.30" stroke="#ff3c3c" stroke-width="1.2"/><path d="M668.00,767.18 L669.54,766.03 L671.09,764.89 L672.63,763.77 L674.17,762.66 L675.72,761.57 L677.26,760.50 L678.80,759.44 L680.35,758.40 L681.89,757.38 L683.43,756.37 L684.98,755.39 L686.52,754.43 L688.06,753.49 L689.61,752.58 L691.15,751.69 L692.69,750.82 L694.24,749.98 L695.78,749.17 L697.32,748.39 L698.87,747.64 L700.41,746.92 L701.95,746.23 L703.50,745.58 L705.04,744.97 L706.59,744.40 L708.13,743.87 L709.67,743.38 L711.22,742.94 L712.76,742.55 L714.30,742.21 L715.85,741.93 L717.39,741.71 L718.93,741.55 L720.48,741.45 L722.02,741.43 L723.56,741.48 L725.11,741.61 L726.65,741.83 L728.19,742.13 L729.74,742.53 L731.28,743.03 L732.82,743.65 L734.37,744.37 L735.91,745.23 L737.45,746.21 L739.00,747.33 L740.54,748.60 L742.08,750.03 L743.63,751.63 L745.17,753.41 L746.71,755.38 L748.26,757.55 L749.80,759.93 L751.34,762.54 L752.89,765.39 L754.43,768.48 L755.97,771.82 L757.52,775.43 L759.06,779.30 L760.60,783.43 L762.15,787.82 L763.69,792.44 L765.23,797.26 L766.78,802.22 L768.32,807.25 L769.86,812.24 L771.41,817.03 L772.95,821.44 L774.49,825.24 L776.04,828.19 L777.58,830.04 L779.13,830.62 L780.67,829.81 L782.21,827.63 L783.76,824.19 L785.30,819.69 L786.84,814.37 L788.39,808.47 L789.93,802.20 L791.47,795.75 L793.02,789.26 L794.56,782.83 L796.10,776.54 L797.65,770.42 L799.19,764.53 L800.73,758.86 L802.28,753.43 L803.82,748.24 L805.36,743.29 L806.91,738.57 L808.45,734.07 L809.99,729.78 L811.54,725.70 L813.08,721.80 L814.62,718.08 L816.17,714.54 L817.71,711.15 L819.25,707.91 L820.80,704.82 L822.34,701.86 L823.88,699.02 L825.43,696.30 L826.97,693.69 L828.51,691.18 L830.06,688.78 L831.60,686.46 L833.14,684.23 L834.69,682.09 L836.23,680.02 L837.77,678.02 L839.32,676.09 L840.86,674.23 L842.40,672.42 L843.95,670.68 L845.49,668.99 L847.04,667.35 L848.58,665.76 L850.12,664.22 L851.67,662.73 L853.21,661.27 L854.75,659.86 L856.30,658.49 L857.84,657.15 L859.38,655.84 L860.93,654.58 L862.47,653.34 L864.01,652.13 L865.56,650.95 L867.10,649.81 L868.64,648.68 L870.19,647.59 L871.73,646.52 L873.27,645.47 L874.82,644.44 L876.36,643.44 L877.90,642.46 L879.45,641.50 L880.99,640.56 L882.53,639.64 L884.08,638.74 L885.62,637.85 L887.16,636.98 L888.71,636.13 L890.25,635.30 L891.79,634.48 L893.34,633.68 L894.88,632.89 L896.42,632.11 L897.97,631.35 L899.51,630.61 L901.05,629.87 L902.60,629.15 L904.14,628.45 L905.68,627.75 L907.23,627.07 L908.77,626.39 L910.31,625.73 L911.86,625.08 L913.40,624.44 L914.94,623.82 L916.49,623.20 L918.03,622.59 L919.58,621.99 L921.12,621.40 L922.66,620.82 L924.21,620.25 L925.75,619.69 L927.29,619.14 L928.84,618.59 L930.38,618.06 L931.92,617.53 L933.47,617.01 L935.01,616.50 L936.55,616.00 L938.10,615.50 L939.64,615.02 L941.18,614.54 L942.73,614.06 L944.27,613.60 L945.81,613.14 L947.36,612.69 L948.90,612.24 L950.44,611.80 L951.99,611.37 L953.53,610.94 L955.07,610.52 L956.62,610.11 L958.16,609.70 L959.70,609.30 L961.25,608.91 L962.79,608.52 L964.33,608.13 L965.88,607.75 L967.42,607.38 L968.96,607.01 L970.51,606.65 L972.05,606.29 L973.59,605.94 L975.14,605.60 L976.68,605.25 L978.22,604.92 L979.77,604.59 L981.31,604.26 L982.85,603.94 L984.40,603.62 L985.94,603.31 L987.48,603.00 L989.03,602.70 L990.57,602.40 L992.12,602.10 L993.66,601.81 L995.20,601.52 L996.75,601.24 L998.29,600.96 L999.83,600.69 L1001.38,600.42 L1002.92,600.15 L1004.46,599.89 L1006.01,599.63 L1007.55,599.37 L1009.09,599.12 L1010.64,598.87 L1012.18,598.63 L1013.72,598.39 L1015.27,598.15 L1016.81,597.92 L1018.35,597.69 L1019.90,597.46 L1021.44,597.24 L1022.98,597.01 L1024.53,596.80 L1026.07,596.58 L1027.61,596.37 L1029.16,596.16 L1030.70,595.96 L1032.24,595.76 L1033.79,595.56 L1035.33,595.36 L1036.87,595.17 L1038.42,594.98 L1039.96,594.79 L1041.50,594.60 L1043.05,594.42 L1044.59,594.24 L1046.13,594.06 L1047.68,593.89 L1049.22,593.72 L1050.76,593.55 L1052.31,593.38 L1053.85,593.21 L1055.39,593.05 L1056.94,592.89 L1058.48,592.73 L1060.03,592.58 L1061.57,592.43 L1063.11,592.27 L1064.66,592.13 L1066.20,591.98 L1067.74,591.83 L1069.29,591.69 L1070.83,591.55 L1072.37,591.41 L1073.92,591.28 L1075.46,591.14 L1077.00,591.01 L1078.55,590.88 L1080.09,590.75 L1081.63,590.63 L1083.18,590.50 L1084.72,590.38 L1086.26,590.26 L1087.81,590.14 L1089.35,590.02 L1090.89,589.91 L1092.44,589.79 L1093.98,589.68 L1095.52,589.57 L1097.07,589.46 L1098.61,589.35 L1100.15,589.25 L1101.70,589.14 L1103.24,589.04 L1104.78,588.94 L1106.33,588.84 L1107.87,588.74 L1109.41,588.64 L1110.96,588.55 L1112.50,588.45 L1114.04,588.36 L1115.59,588.27 L1117.13,588.18 L1118.67,588.09 L1120.22,588.00 L1121.76,587.92 L1123.30,587.83 L1124.85,587.75 L1126.39,587.67 L1127.93,587.59 L1129.48,587.51 L1131.02,587.43 L1132.57,587.35 L1134.11,587.28 L1135.65,587.20 L1137.20,587.13 L1138.74,587.05 L1140.28,586.98 L1141.83,586.91 L1143.37,586.84 L1144.91,586.77 L1146.46,586.71 L1148.00,586.64 L1149.54,586.57 L1151.09,586.51 L1152.63,586.44 L1154.17,586.38 L1155.72,586.32 L1157.26,586.26 L1158.80,586.20 L1160.35,586.14 L1161.89,586.08 L1163.43,586.02 L1164.98,585.97 L1166.52,585.91 L1168.06,585.86 L1169.61,585.80 L1171.15,585.75 L1172.69,585.70 L1174.24,585.65 L1175.78,585.60 L1177.32,585.55 L1178.87,585.50 L1180.41,585.45 L1181.95,585.40 L1183.50,585.35 L1185.04,585.31 L1186.58,585.26 L1188.13,585.22 L1189.67,585.17 L1191.21,585.13 L1192.76,585.09 L1194.30,585.04 L1195.84,585.00 L1197.39,584.96 L1198.93,584.92 L1200.47,584.88 L1202.02,584.84 L1203.56,584.80 L1205.11,584.76 L1206.65,584.73 L1208.19,584.69 L1209.74,584.65 L1211.28,584.62 L1212.82,584.58 L1214.37,584.55 L1215.91,584.51 L1217.45,584.48 L1219.00,584.45 L1220.54,584.41 L1222.08,584.38 L1223.63,584.35 L1225.17,584.32 L1226.71,584.29 L1228.26,584.26 L1229.80,584.23 L1231.34,584.20 L1232.89,584.17 L1234.43,584.14 L1235.97,584.11 L1237.52,584.08 L1239.06,584.06 L1240.60,584.03 L1242.15,584.00 L1243.69,583.98 L1245.23,583.95 L1246.78,583.93 L1248.32,583.90 L1249.86,583.88 L1251.41,583.85 L1252.95,583.83 L1254.49,583.81 L1256.04,583.78 L1257.58,583.76 L1259.12,583.74 L1260.67,583.72 L1262.21,583.69 L1263.75,583.67 L1265.30,583.65 L1266.84,583.63 L1268.38,583.61 L1269.93,583.59 L1271.47,583.57 L1273.02,583.55 L1274.56,583.53 L1276.10,583.51 L1277.65,583.49 L1279.19,583.48 L1280.73,583.46 L1282.28,583.44 L1283.82,583.42 L1285.36,583.41 L1286.91,583.39 L1288.45,583.37 L1289.99,583.35 L1291.54,583.34 L1293.08,583.32 L1294.62,583.31 L1296.17,583.29 L1297.71,583.28 L1299.25,583.26 L1300.80,583.25 L1302.34,583.23 L1303.88,583.22 L1305.43,583.20 L1306.97,583.19 L1308.51,583.18 L1310.06,583.16 L1311.60,583.15 L1313.14,583.14 L1314.69,583.12 L1316.23,583.11 L1317.77,583.10 L1319.32,583.09 L1320.86,583.07 L1322.40,583.06 L1323.95,583.05 L1325.49,583.04 L1327.03,583.03 L1328.58,583.01 L1330.12,583.00 L1331.66,582.99 L1333.21,582.98 L1334.75,582.97 L1336.29,582.96 L1337.84,582.95 L1339.38,582.94 L1340.92,582.93 L1342.47,582.92 L1344.01,582.91 L1345.56,582.90 L1347.10,582.89 L1348.64,582.88 L1350.19,582.87 L1351.73,582.87 L1353.27,582.86 L1354.82,582.85 L1356.36,582.84 L1357.90,582.83 L1359.45,582.82 L1360.99,582.81 L1362.53,582.81 L1364.08,582.80 L1365.62,582.79 L1367.16,582.78 L1368.71,582.78 L1370.25,582.77 L1371.79,582.76 L1373.34,582.75 L1374.88,582.75 L1376.42,582.74 L1377.97,582.73 L1379.51,582.73 L1381.05,582.72 L1382.60,582.71 L1384.14,582.71 L1385.68,582.70 L1387.23,582.69 L1388.77,582.69 L1390.31,582.68 L1391.86,582.68 L1393.40,582.67 L1394.94,582.66 L1396.49,582.66 L1398.03,582.65 L1399.57,582.65 L1401.12,582.64 L1402.66,582.64 L1404.20,582.63 L1405.75,582.63 L1407.29,582.62 L1408.83,582.61 L1410.38,582.61 L1411.92,582.61 L1413.46,582.60 L1415.01,582.60 L1416.55,582.59 L1418.10,582.59 L1419.64,582.58 L1421.18,582.58 L1422.73,582.57 L1424.27,582.57 L1425.81,582.56 L1427.36,582.56 L1428.90,582.56 L1430.44,582.55 L1431.99,582.55 L1433.53,582.54 L1435.07,582.54 L1436.62,582.54 L1438.16,582.53 L1439.70,582.53 L1441.25,582.52 L1442.79,582.52 L1444.33,582.52 L1445.88,582.51 L1447.42,582.51 L1448.96,582.51 L1450.51,582.50 L1452.05,582.50 L1453.59,582.50 L1455.14,582.49 L1456.68,582.49 L1458.22,582.49 L1459.77,582.48 L1461.31,582.48 L1462.85,582.48 L1464.40,582.48 L1465.94,582.47 L1467.48,582.47 L1469.03,582.47 L1470.57,582.46 L1472.11,582.46 L1473.66,582.46 L1475.20,582.46 L1476.74,582.45 L1478.29,582.45 L1479.83,582.45 L1481.37,582.45 L1482.92,582.44 L1484.46,582.44 L1486.01,582.44 L1487.55,582.44 L1489.09,582.43 L1490.64,582.43 L1492.18,582.43 L1493.72,582.43 L1495.27,582.43 L1496.81,582.42 L1498.35,582.42 L1499.90,582.42 L1501.44,582.42 L1502.98,582.42 L1504.53,582.41 L1506.07,582.41 L1507.61,582.41 L1509.16,582.41 L1510.70,582.41 L1512.24,582.40 L1513.79,582.40 L1515.33,582.40 L1516.87,582.40 L1518.42,582.40 L1519.96,582.40 L1521.50,582.39 L1523.05,582.39 L1524.59,582.39 L1526.13,582.39 L1527.68,582.39 L1529.22,582.39 L1530.76,582.38 L1532.31,582.38 L1533.85,582.38 L1535.39,582.38 L1536.94,582.38 L1538.48,582.38 L1540.02,582.38 L1541.57,582.37 L1543.11,582.37 L1544.65,582.37 L1546.20,582.37 L1547.74,582.37 L1549.28,582.37 L1550.83,582.37 L1552.37,582.37 L1553.91,582.36 L1555.46,582.36 L1557.00,582.36 L1558.55,582.36 L1560.09,582.36 L1561.63,582.36 L1563.18,582.36 L1564.72,582.36 L1566.26,582.36 L1567.81,582.35 L1569.35,582.35 L1570.89,582.35 L1572.44,582.35 L1573.98,582.35 L1575.52,582.35 L1577.07,582.35 L1578.61,582.35 L1580.15,582.35 L1581.70,582.35 L1583.24,582.35 L1584.78,582.34 L1586.33,582.34 L1587.87,582.34 L1589.41,582.34 L1590.96,582.34 L1592.50,582.34" stroke="#2a2aff" stroke-width="1.2"/><path d="M668.00,850.50 L669.54,846.72 L671.09,842.94 L672.63,839.16 L674.17,835.36 L675.72,831.57 L677.26,827.76 L678.80,823.96 L680.35,820.14 L681.89,816.32 L683.43,812.50 L684.98,808.67 L686.52,804.83 L688.06,800.99 L689.61,797.14 L691.15,793.29 L692.69,789.43 L694.24,785.57 L695.78,781.70 L697.32,777.83 L698.87,773.95 L700.41,770.07 L701.95,766.19 L703.50,762.30 L705.04,758.41 L706.59,754.52 L708.13,750.62 L709.67,746.72 L711.22,742.82 L712.76,738.92 L714.30,735.03 L715.85,731.13 L717.39,727.23 L718.93,723.34 L720.48,719.45 L722.02,715.57 L723.56,711.70 L725.11,707.83 L726.65,703.97 L728.19,700.13 L729.74,696.30 L731.28,692.48 L732.82,688.69 L734.37,684.91 L735.91,681.16 L737.45,677.43 L739.00,673.73 L740.54,670.06 L742.08,666.43 L743.63,662.84 L745.17,659.29 L746.71,655.78 L748.26,652.33 L749.80,648.93 L751.34,645.59 L752.89,642.31 L754.43,639.10 L755.97,635.95 L757.52,632.89 L759.06,629.90 L760.60,627.00 L762.15,624.19 L763.69,621.47 L765.23,618.84 L766.78,616.31 L768.32,613.89 L769.86,611.56 L771.41,609.35 L772.95,607.24 L774.49,605.24 L776.04,603.35 L777.58,601.56 L779.13,599.89 L780.67,598.33 L782.21,596.87 L783.76,595.51 L785.30,594.26 L786.84,593.11 L788.39,592.05 L789.93,591.08 L791.47,590.20 L793.02,589.41 L794.56,588.70 L796.10,588.06 L797.65,587.50 L799.19,587.01 L800.73,586.57 L802.28,586.20 L803.82,585.88 L805.36,585.61 L806.91,585.39 L808.45,585.22 L809.99,585.08 L811.54,584.98 L813.08,584.91 L814.62,584.87 L816.17,584.86 L817.71,584.87 L819.25,584.90 L820.80,584.95 L822.34,585.02 L823.88,585.11 L825.43,585.20 L826.97,585.31 L828.51,585.43 L830.06,585.55 L831.60,585.68 L833.14,585.82 L834.69,585.96 L836.23,586.10 L837.77,586.25 L839.32,586.40 L840.86,586.55 L842.40,586.69 L843.95,586.84 L845.49,586.99 L847.04,587.13 L848.58,587.27 L850.12,587.41 L851.67,587.55 L853.21,587.68 L854.75,587.81 L856.30,587.94 L857.84,588.06 L859.38,588.18 L860.93,588.30 L862.47,588.41 L864.01,588.51 L865.56,588.62 L867.10,588.71 L868.64,588.81 L870.19,588.90 L871.73,588.98 L873.27,589.06 L874.82,589.14 L876.36,589.21 L877.90,589.28 L879.45,589.34 L880.99,589.40 L882.53,589.46 L884.08,589.51 L885.62,589.55 L887.16,589.60 L888.71,589.64 L890.25,589.67 L891.79,589.70 L893.34,589.73 L894.88,589.76 L896.42,589.78 L897.97,589.80 L899.51,589.81 L901.05,589.83 L902.60,589.84 L904.14,589.84 L905.68,589.85 L907.23,589.85 L908.77,589.84 L910.31,589.84 L911.86,589.83 L913.40,589.82 L914.94,589.81 L916.49,589.80 L918.03,589.78 L919.58,589.76 L921.12,589.74 L922.66,589.72 L924.21,589.70 L925.75,589.67 L927.29,589.65 L928.84,589.62 L930.38,589.59 L931.92,589.55 L933.47,589.52 L935.01,589.49 L936.55,589.45 L938.10,589.41 L939.64,589.37 L941.18,589.33 L942.73,589.29 L944.27,589.25 L945.81,589.21 L947.36,589.17 L948.90,589.12 L950.44,589.08 L951.99,589.03 L953.53,588.98 L955.07,588.94 L956.62,588.89 L958.16,588.84 L959.70,588.79 L961.25,588.74 L962.79,588.69 L964.33,588.64 L965.88,588.59 L967.42,588.54 L968.96,588.49 L970.51,588.43 L972.05,588.38 L973.59,588.33 L975.14,588.28 L976.68,588.22 L978.22,588.17 L979.77,588.12 L981.31,588.07 L982.85,588.01 L984.40,587.96 L985.94,587.91 L987.48,587.85 L989.03,587.80 L990.57,587.75 L992.12,587.69 L993.66,587.64 L995.20,587.59 L996.75,587.54 L998.29,587.48 L999.83,587.43 L1001.38,587.38 L1002.92,587.33 L1004.46,587.27 L1006.01,587.22 L1007.55,587.17 L1009.09,587.12 L1010.64,587.07 L1012.18,587.02 L1013.72,586.97 L1015.27,586.92 L1016.81,586.87 L1018.35,586.82 L1019.90,586.77 L1021.44,586.72 L1022.98,586.67 L1024.53,586.62 L1026.07,586.57 L1027.61,586.53 L1029.16,586.48 L1030.70,586.43 L1032.24,586.38 L1033.79,586.34 L1035.33,586.29 L1036.87,586.25 L1038.42,586.20 L1039.96,586.16 L1041.50,586.11 L1043.05,586.07 L1044.59,586.02 L1046.13,585.98 L1047.68,585.94 L1049.22,585.89 L1050.76,585.85 L1052.31,585.81 L1053.85,585.77 L1055.39,585.73 L1056.94,585.69 L1058.48,585.65 L1060.03,585.61 L1061.57,585.57 L1063.11,585.53 L1064.66,585.49 L1066.20,585.45 L1067.74,585.41 L1069.29,585.38 L1070.83,585.34 L1072.37,585.30 L1073.92,585.26 L1075.46,585.23 L1077.00,585.19 L1078.55,585.16 L1080.09,585.12 L1081.63,585.09 L1083.18,585.05 L1084.72,585.02 L1086.26,584.99 L1087.81,584.95 L1089.35,584.92 L1090.89,584.89 L1092.44,584.86 L1093.98,584.83 L1095.52,584.80 L1097.07,584.76 L1098.61,584.73 L1100.15,584.70 L1101.70,584.67 L1103.24,584.65 L1104.78,584.62 L1106.33,584.59 L1107.87,584.56 L1109.41,584.53 L1110.96,584.50 L1112.50,584.48 L1114.04,584.45 L1115.59,584.42 L1117.13,584.40 L1118.67,584.37 L1120.22,584.35 L1121.76,584.32 L1123.30,584.30 L1124.85,584.27 L1126.39,584.25 L1127.93,584.22 L1129.48,584.20 L1131.02,584.18 L1132.57,584.15 L1134.11,584.13 L1135.65,584.11 L1137.20,584.09 L1138.74,584.06 L1140.28,584.04 L1141.83,584.02 L1143.37,584.00 L1144.91,583.98 L1146.46,583.96 L1148.00,583.94 L1149.54,583.92 L1151.09,583.90 L1152.63,583.88 L1154.17,583.86 L1155.72,583.84 L1157.26,583.82 L1158.80,583.80 L1160.35,583.78 L1161.89,583.77 L1163.43,583.75 L1164.98,583.73 L1166.52,583.71 L1168.06,583.70 L1169.61,583.68 L1171.15,583.66 L1172.69,583.65 L1174.24,583.63 L1175.78,583.62 L1177.32,583.60 L1178.87,583.58 L1180.41,583.57 L1181.95,583.55 L1183.50,583.54 L1185.04,583.53 L1186.58,583.51 L1188.13,583.50 L1189.67,583.48 L1191.21,583.47 L1192.76,583.46 L1194.30,583.44 L1195.84,583.43 L1197.39,583.42 L1198.93,583.40 L1200.47,583.39 L1202.02,583.38 L1203.56,583.37 L1205.11,583.35 L1206.65,583.34 L1208.19,583.33 L1209.74,583.32 L1211.28,583.31 L1212.82,583.30 L1214.37,583.28 L1215.91,583.27 L1217.45,583.26 L1219.00,583.25 L1220.54,583.24 L1222.08,583.23 L1223.63,583.22 L1225.17,583.21 L1226.71,583.20 L1228.26,583.19 L1229.80,583.18 L1231.34,583.17 L1232.89,583.16 L1234.43,583.15 L1235.97,583.14 L1237.52,583.13 L1239.06,583.13 L1240.60,583.12 L1242.15,583.11 L1243.69,583.10 L1245.23,583.09 L1246.78,583.08 L1248.32,583.08 L1249.86,583.07 L1251.41,583.06 L1252.95,583.05 L1254.49,583.04 L1256.04,583.04 L1257.58,583.03 L1259.12,583.02 L1260.67,583.01 L1262.21,583.01 L1263.75,583.00 L1265.30,582.99 L1266.84,582.99 L1268.38,582.98 L1269.93,582.97 L1271.47,582.97 L1273.02,582.96 L1274.56,582.95 L1276.10,582.95 L1277.65,582.94 L1279.19,582.94 L1280.73,582.93 L1282.28,582.92 L1283.82,582.92 L1285.36,582.91 L1286.91,582.91 L1288.45,582.90 L1289.99,582.90 L1291.54,582.89 L1293.08,582.89 L1294.62,582.88 L1296.17,582.88 L1297.71,582.87 L1299.25,582.87 L1300.80,582.86 L1302.34,582.86 L1303.88,582.85 L1305.43,582.85 L1306.97,582.84 L1308.51,582.84 L1310.06,582.83 L1311.60,582.83 L1313.14,582.82 L1314.69,582.82 L1316.23,582.82 L1317.77,582.81 L1319.32,582.81 L1320.86,582.80 L1322.40,582.80 L1323.95,582.80 L1325.49,582.79 L1327.03,582.79 L1328.58,582.78 L1330.12,582.78 L1331.66,582.78 L1333.21,582.77 L1334.75,582.77 L1336.29,582.77 L1337.84,582.76 L1339.38,582.76 L1340.92,582.76 L1342.47,582.75 L1344.01,582.75 L1345.56,582.75 L1347.10,582.74 L1348.64,582.74 L1350.19,582.74 L1351.73,582.73 L1353.27,582.73 L1354.82,582.73 L1356.36,582.73 L1357.90,582.72 L1359.45,582.72 L1360.99,582.72 L1362.53,582.71 L1364.08,582.71 L1365.62,582.71 L1367.16,582.71 L1368.71,582.70 L1370.25,582.70 L1371.79,582.70 L1373.34,582.70 L1374.88,582.69 L1376.42,582.69 L1377.97,582.69 L1379.51,582.69 L1381.05,582.69 L1382.60,582.68 L1384.14,582.68 L1385.68,582.68 L1387.23,582.68 L1388.77,582.67 L1390.31,582.67 L1391.86,582.67 L1393.40,582.67 L1394.94,582.67 L1396.49,582.66 L1398.03,582.66 L1399.57,582.66 L1401.12,582.66 L1402.66,582.66 L1404.20,582.66 L1405.75,582.65 L1407.29,582.65 L1408.83,582.65 L1410.38,582.65 L1411.92,582.65 L1413.46,582.65 L1415.01,582.64 L1416.55,582.64 L1418.10,582.64 L1419.64,582.64 L1421.18,582.64 L1422.73,582.64 L1424.27,582.63 L1425.81,582.63 L1427.36,582.63 L1428.90,582.63 L1430.44,582.63 L1431.99,582.63 L1433.53,582.63 L1435.07,582.63 L1436.62,582.62 L1438.16,582.62 L1439.70,582.62 L1441.25,582.62 L1442.79,582.62 L1444.33,582.62 L1445.88,582.62 L1447.42,582.62 L1448.96,582.61 L1450.51,582.61 L1452.05,582.61 L1453.59,582.61 L1455.14,582.61 L1456.68,582.61 L1458.22,582.61 L1459.77,582.61 L1461.31,582.61 L1462.85,582.60 L1464.40,582.60 L1465.94,582.60 L1467.48,582.60 L1469.03,582.60 L1470.57,582.60 L1472.11,582.60 L1473.66,582.60 L1475.20,582.60 L1476.74,582.60 L1478.29,582.60 L1479.83,582.59 L1481.37,582.59 L1482.92,582.59 L1484.46,582.59 L1486.01,582.59 L1487.55,582.59 L1489.09,582.59 L1490.64,582.59 L1492.18,582.59 L1493.72,582.59 L1495.27,582.59 L1496.81,582.59 L1498.35,582.59 L1499.90,582.58 L1501.44,582.58 L1502.98,582.58 L1504.53,582.58 L1506.07,582.58 L1507.61,582.58 L1509.16,582.58 L1510.70,582.58 L1512.24,582.58 L1513.79,582.58 L1515.33,582.58 L1516.87,582.58 L1518.42,582.58 L1519.96,582.58 L1521.50,582.58 L1523.05,582.58 L1524.59,582.57 L1526.13,582.57 L1527.68,582.57 L1529.22,582.57 L1530.76,582.57 L1532.31,582.57 L1533.85,582.57 L1535.39,582.57 L1536.94,582.57 L1538.48,582.57 L1540.02,582.57 L1541.57,582.57 L1543.11,582.57 L1544.65,582.57 L1546.20,582.57 L1547.74,582.57 L1549.28,582.57 L1550.83,582.57 L1552.37,582.57 L1553.91,582.57 L1555.46,582.57 L1557.00,582.57 L1558.55,582.56 L1560.09,582.56 L1561.63,582.56 L1563.18,582.56 L1564.72,582.56 L1566.26,582.56 L1567.81,582.56 L1569.35,582.56 L1570.89,582.56 L1572.44,582.56 L1573.98,582.56 L1575.52,582.56 L1577.07,582.56 L1578.61,582.56 L1580.15,582.56 L1581.70,582.56 L1583.24,582.56 L1584.78,582.56 L1586.33,582.56 L1587.87,582.56 L1589.41,582.56 L1590.96,582.56 L1592.50,582.56" stroke="#606060" stroke-width="2.3"/></g></svg>
<div class="t" style="left:262px;width:400px;text-align:right;top:987px;font-size:18px;line-height:18px;color:#000;transform:scaleY(1.06);transform-origin:0 15px;">65</div>
<div class="t" style="left:262px;width:400px;text-align:right;top:920px;font-size:18px;line-height:18px;color:#000;transform:scaleY(1.06);transform-origin:0 15px;">70</div>
<div class="t" style="left:262px;width:400px;text-align:right;top:854px;font-size:18px;line-height:18px;color:#000;transform:scaleY(1.06);transform-origin:0 15px;">75</div>
<div class="t" style="left:262px;width:400px;text-align:right;top:787px;font-size:18px;line-height:18px;color:#000;transform:scaleY(1.06);transform-origin:0 15px;">80</div>
<div class="t" style="left:262px;width:400px;text-align:right;top:721px;font-size:18px;line-height:18px;color:#000;transform:scaleY(1.06);transform-origin:0 15px;">85</div>
<div class="t" style="left:262px;width:400px;text-align:right;top:655px;font-size:18px;line-height:18px;color:#000;transform:scaleY(1.06);transform-origin:0 15px;">90</div>
<div class="t" style="left:262px;width:400px;text-align:right;top:588px;font-size:18px;line-height:18px;color:#000;transform:scaleY(1.06);transform-origin:0 15px;">95</div>
<div class="t" style="left:262px;width:400px;text-align:right;top:522px;font-size:18px;line-height:18px;color:#000;transform:scaleY(1.06);transform-origin:0 15px;">100</div>
<div class="t" style="left:262px;width:400px;text-align:right;top:456px;font-size:18px;line-height:18px;color:#000;transform:scaleY(1.06);transform-origin:0 15px;">105</div>
<div class="t" style="left:1419px;width:400px;text-align:center;top:455px;font-size:18px;line-height:18px;color:#000;transform:scaleY(1.06);transform-origin:0 15px;">180</div>
<div class="t" style="left:1419px;width:400px;text-align:center;top:522px;font-size:18px;line-height:18px;color:#000;transform:scaleY(1.06);transform-origin:0 15px;">135</div>
<div class="t" style="left:1419px;width:400px;text-align:center;top:588px;font-size:18px;line-height:18px;color:#000;transform:scaleY(1.06);transform-origin:0 15px;">90</div>
<div class="t" style="left:1419px;width:400px;text-align:center;top:655px;font-size:18px;line-height:18px;color:#000;transform:scaleY(1.06);transform-origin:0 15px;">45</div>
<div class="t" style="left:1419px;width:400px;text-align:center;top:721px;font-size:18px;line-height:18px;color:#000;transform:scaleY(1.06);transform-origin:0 15px;">0</div>
<div class="t" style="left:1419px;width:400px;text-align:center;top:787px;font-size:18px;line-height:18px;color:#000;transform:scaleY(1.06);transform-origin:0 15px;">-45</div>
<div class="t" style="left:1419px;width:400px;text-align:center;top:854px;font-size:18px;line-height:18px;color:#000;transform:scaleY(1.06);transform-origin:0 15px;">-90</div>
<div class="t" style="left:1419px;width:400px;text-align:center;top:920px;font-size:18px;line-height:18px;color:#000;transform:scaleY(1.06);transform-origin:0 15px;">-135</div>
<div class="t" style="left:1419px;width:400px;text-align:center;top:987px;font-size:18px;line-height:18px;color:#000;transform:scaleY(1.06);transform-origin:0 15px;">-180</div>
<div class="t" style="left:658px;top:1002px;font-size:18px;line-height:18px;color:#000;transform:scaleY(1.06);transform-origin:0 15px;">20Hz</div>
<div class="t" style="left:651.9477690086494px;width:400px;text-align:center;top:1002px;font-size:18px;line-height:18px;color:#000;transform:scaleY(1.06);transform-origin:0 15px;">50</div>
<div class="t" style="left:791.0988845043247px;width:400px;text-align:center;top:1002px;font-size:18px;line-height:18px;color:#000;transform:scaleY(1.06);transform-origin:0 15px;">100</div>
<div class="t" style="left:930.25px;width:400px;text-align:center;top:1002px;font-size:18px;line-height:18px;color:#000;transform:scaleY(1.06);transform-origin:0 15px;">200</div>
<div class="t" style="left:1114.1977690086494px;width:400px;text-align:center;top:1002px;font-size:18px;line-height:18px;color:#000;transform:scaleY(1.06);transform-origin:0 15px;">500</div>
<div class="t" style="left:1253.3488845043248px;width:400px;text-align:center;top:1002px;font-size:18px;line-height:18px;color:#000;transform:scaleY(1.06);transform-origin:0 15px;">1k</div>
<div class="t" style="left:1392.5px;width:400px;text-align:center;top:1002px;font-size:18px;line-height:18px;color:#000;transform:scaleY(1.06);transform-origin:0 15px;">2k</div>
<div class="t" style="left:671px;top:444px;font-size:18px;line-height:18px;color:#000;transform:scaleY(1.06);transform-origin:0 15px;">dB</div>
<div class="t" style="left:930px;width:400px;text-align:center;top:442px;font-size:20px;line-height:20px;color:#000;transform:scaleY(1.06);transform-origin:0 17px;">SPL</div>
<div class="t" style="left:1190px;width:400px;text-align:right;top:444px;font-size:18px;line-height:18px;color:#000;transform:scaleY(1.06);transform-origin:0 15px;">deg</div>
<div class="t" style="left:768px;top:614px;font-size:18px;line-height:18px;color:#606060;transform:scaleY(1.06);transform-origin:0 15px;">f3 32,2 Hz</div>
<div class="t" style="left:750px;top:649px;font-size:18px;line-height:18px;color:#606060;transform:scaleY(1.06);transform-origin:0 15px;">f6 29,5 Hz</div>
<div class="t" style="left:730px;top:704px;font-size:18px;line-height:18px;color:#606060;transform:scaleY(1.06);transform-origin:0 15px;">f10 26,3 Hz</div>
<div class="r" style="left:2px;top:1028px;width:1915px;height:2px;background:#f8f8f8;"></div>
<div class="r" style="left:0px;top:1030px;width:1920px;height:50px;background:#1c1c1c;"></div>
<div class="r" style="left:310px;top:1030px;width:57px;height:50px;background:#505050;"></div>
<div class="r" style="left:367px;top:1030px;width:4px;height:50px;background:#3c3c3c;"></div>
<div class="r" style="left:310px;top:1077px;width:57px;height:3px;background:#c8c8c8;"></div>
<div class="r" style="left:367px;top:1077px;width:4px;height:3px;background:#8c8c8c;"></div>
<div class="r" style="left:253px;top:1077px;width:51px;height:3px;background:#c8c8c8;"></div>
<div class="r" style="left:873px;top:1077px;width:51px;height:3px;background:#c8c8c8;"></div>
<svg class="r" style="left:19px;top:1044px" width="22" height="22" viewBox="0 0 22 22"><path d="M0.7 2.9 L9 1.8 V9.8 H0.7 Z M10.2 1.6 L21.1 0.6 V9.8 H10.2 Z M0.7 10.8 H9 V19.6 L0.7 18.6 Z M10.2 10.8 H21.1 V21.2 L10.2 19.8 Z" fill="#fff"/></svg>
<svg class="r" style="left:75px;top:1040px" width="32" height="32" viewBox="0 0 32 32"><circle cx="17.5" cy="12.3" r="9.7" fill="none" stroke="#fff" stroke-width="3"/><path d="M11 19.2 L2.5 27.8" stroke="#fff" stroke-width="3" stroke-linecap="round"/></svg>
<svg class="r" style="left:137px;top:1040px" width="34" height="30" viewBox="0 0 34 30"><text x="1" y="14.3" font-family="Liberation Sans" font-size="15.5" font-weight="bold" fill="#6ee02a" textLength="15" lengthAdjust="spacingAndGlyphs">m</text><path d="M16.5 14 V5.5 Q16.5 4 19 4 Q22.5 4 22.5 8 Q22.5 12.5 18.5 13" fill="none" stroke="#cfcfcf" stroke-width="2"/><text x="23.5" y="14.3" font-family="Liberation Sans" font-size="15" font-weight="bold" fill="#2f8fe8">3</text><path d="M17.5 5 V26 M10 17 H28" stroke="#d0d0d0" stroke-width="1.8"/><path d="M15.5 17.5 Q7 17.5 7 20 Q7 23 12 23 Q17 23 17 19" fill="none" stroke="#c8c8c8" stroke-width="1.8"/></svg>
<svg class="r" style="left:199px;top:1039px" width="34" height="30" viewBox="0 0 34 30"><defs><radialGradient id="au" cx="0.5" cy="0.6" r="0.6"><stop offset="0" stop-color="#ff8c00"/><stop offset="1" stop-color="#e8d020"/></radialGradient></defs><path d="M4.5 19 Q4.5 3 16.5 3 Q28.5 3 28.5 19" fill="none" stroke="#0000f0" stroke-width="2.8"/><path d="M2 18 Q2 12.5 7 12.5 H8.5 V26.5 H7 Q2 26.5 2 21 Z" fill="#0000f0"/><path d="M31 18 Q31 12.5 26 12.5 H24.5 V26.5 H26 Q31 26.5 31 21 Z" fill="#0000f0"/><ellipse cx="16.5" cy="19" rx="7.6" ry="8.5" fill="url(#au)"/><path d="M9 20 H24" stroke="#ff1010" stroke-width="2.4"/></svg>
<svg class="r" style="left:262px;top:1040px" width="31" height="31" viewBox="0 0 31 31"><circle cx="15.5" cy="15.5" r="15" fill="#db4437"/><path d="M15.5 15.5 L2.5 8 A15 15 0 0 0 15.5 30.5 Z" fill="#0f9d58"/><path d="M15.5 15.5 L15.5 30.5 A15 15 0 0 0 28.5 8 Z" fill="#f4c20d"/><path d="M15.5 15.5 L2.5 8 A15 15 0 0 1 28.5 8 Z" fill="#db4437"/><circle cx="15.5" cy="15.5" r="7" fill="#fff"/><circle cx="15.5" cy="15.5" r="5.5" fill="#4285f4"/></svg>
<svg class="r" style="left:325px;top:1043px" width="31" height="24" viewBox="0 0 31 24"><path d="M1.5 5.5 L6.5 1.5 H24 L29 5.5 L15.3 21.5 Z" fill="#ff1010" stroke="#3a0000" stroke-width="0.9" stroke-linejoin="round"/><path d="M10.5 3.5 H20.5 L15.5 11 Z" fill="#f2f200"/><path d="M6 6 Q9 11 13.5 15.5 Q9.5 8 8.5 5 Z M25 6 Q22 11 17.5 15.5 Q21.5 8 22.5 5 Z" fill="#e6e600"/></svg>
<svg class="r" style="left:387px;top:1041px" width="28" height="28" viewBox="0 0 28 28"><circle cx="14" cy="14" r="14" fill="#111"/><circle cx="14" cy="14" r="11.5" fill="#f5b400"/><path d="M14 6.5 L21 19.5 H7 Z" fill="#111"/><path d="M14 11 L17.5 17 H10.5 Z" fill="#f5b400"/></svg>
<svg class="r" style="left:449px;top:1039px" width="31" height="31" viewBox="0 0 31 31"><path d="M15.5 1.5 C25 1.5 29.5 5 29.5 14 C29.5 23 25 26.5 15.5 26.5 L10 30 L10 26 C4 24.5 1.5 21 1.5 14 C1.5 5 6 1.5 15.5 1.5 Z" fill="#7360f2" stroke="#fff" stroke-width="1.5"/><path d="M10 9 Q9 11 11 15 Q14 20 19 21 Q21 21 21.5 19 L19 17 L17.5 18 Q14 16.5 12.5 13 L13.5 11.5 L11.5 8.5 Z" fill="#fff"/><path d="M16 8 Q21 8.5 22 13.5 M16 10.5 Q19 11 19.5 13.5" fill="none" stroke="#fff" stroke-width="1.1"/></svg>
<svg class="r" style="left:513px;top:1040px" width="25" height="31" viewBox="0 0 25 31"><path d="M2 12 C2 8 4 5 6 1 L10 6 H15 L19 1 C21 5 23 8 23 12 C23 18 19 24 12.5 29 C6 24 2 18 2 12 Z" fill="#fff"/><ellipse cx="7.8" cy="14.5" rx="3.4" ry="2" transform="rotate(30 7.8 14.5)" fill="#111"/><ellipse cx="17.2" cy="14.5" rx="3.4" ry="2" transform="rotate(-30 17.2 14.5)" fill="#111"/><path d="M9.5 23 L12.5 20.5 L15.5 23" fill="none" stroke="#333" stroke-width="1.1"/></svg>
<svg class="r" style="left:572px;top:1040px" width="31" height="31" viewBox="0 0 31 31"><defs><linearGradient id="yg" x1="0" y1="0" x2="1" y2="0"><stop offset="0" stop-color="#ff6a1a"/><stop offset="0.55" stop-color="#ff3d3d"/><stop offset="1" stop-color="#ff60d0"/></linearGradient></defs><circle cx="15.5" cy="15.5" r="15" fill="#fff"/><path d="M7.5 8 L15.5 16 L23.5 8 M15.5 16 V25.5" fill="none" stroke="url(#yg)" stroke-width="3.6" stroke-linecap="butt"/></svg>
<svg class="r" style="left:634px;top:1040px" width="31" height="31" viewBox="0 0 31 31"><circle cx="15.5" cy="15.5" r="15" fill="#d8a21a"/><circle cx="15.5" cy="15.5" r="11.5" fill="#78c03c"/><text x="8.5" y="23" font-family="Liberation Serif" font-size="17" font-weight="bold" fill="#6a1020" textLength="14" lengthAdjust="spacingAndGlyphs">11</text></svg>
<svg class="r" style="left:697px;top:1040px" width="32" height="30" viewBox="0 0 32 30"><rect x="10" y="1" width="8" height="8" fill="#26c21e"/><circle cx="14" cy="17" r="10" fill="#26c21e"/><rect x="20" y="12" width="11" height="9" fill="#26c21e"/><circle cx="14" cy="17" r="3.5" fill="#fff"/></svg>
<svg class="r" style="left:759px;top:1040px" width="31" height="28" viewBox="0 0 31 28"><rect x="2" y="3" width="25" height="24" fill="#f3f3ef" stroke="#999" stroke-width="0.8"/><path d="M2 3 H27 V6 H2 Z" fill="#c8b060"/><path d="M5 10 H24 M5 14 H24 M5 18 H20 M5 22 H18" stroke="#9aa" stroke-width="0.9"/><path d="M12 22 L27 9 L30 12 L15 25 L11 26 Z" fill="#f0a02a" stroke="#a05010" stroke-width="0.6"/></svg>
<svg class="r" style="left:821px;top:1039px" width="29" height="33" viewBox="0 0 29 33"><rect x="8" y="2" width="14" height="14" rx="3.5" fill="#ececec"/><path d="M8 6.6 H13 M17 6.6 H22 M8 9.3 H13 M17 9.3 H22 M8 12.3 H13 M17 12.3 H22" stroke="#1c1c1c" stroke-width="1"/><path d="M4.5 19.6 H24.8" stroke="#ececec" stroke-width="5" stroke-linecap="round"/><path d="M15 21 L9 28.5 M15 21 L21 28.5" stroke="#ececec" stroke-width="4.6" stroke-linecap="round"/></svg>
<svg class="r" style="left:882px;top:1039px" width="44" height="36" viewBox="0 0 44 36"><defs><linearGradient id="tg" x1="0" y1="0" x2="0" y2="1"><stop offset="0" stop-color="#37aee2"/><stop offset="1" stop-color="#1e96c8"/></linearGradient></defs><circle cx="15.5" cy="15.5" r="13.5" fill="url(#tg)"/><path d="M8 15.8 L24 9.5 L20 20 Z" fill="#fff"/><path d="M11 16.5 L23.5 10 L14 18.5 Z" fill="#2aa0d8"/><circle cx="23.6" cy="23.5" r="9.3" fill="#8f8f8f"/><text x="19.6" y="28.3" font-family="Liberation Sans" font-size="12.5" fill="#fff">2</text></svg>
<svg class="r" style="left:944px;top:1039px" width="32" height="32" viewBox="0 0 32 32"><rect x="2" y="2" width="28.5" height="28.5" fill="#1e1e1e" stroke="#16a4e6" stroke-width="1.8"/><path d="M6.5 10 H10 V22.5 H6.5 Z M22 10 H25.5 V22.5 H22 Z" fill="none" stroke="#e8e8e8" stroke-width="1.3"/><path d="M10 11 H22 M10 21.5 H22" stroke="#e8e8e8" stroke-width="1.6"/><path d="M6.5 13.5 H10 M6.5 16.3 H10 M6.5 19 H10 M22 13.5 H25.5 M22 16.3 H25.5 M22 19 H25.5" stroke="#e8e8e8" stroke-width="1"/></svg>
<svg class="r" style="left:1007px;top:1040px" width="29" height="30" viewBox="0 0 29 30"><defs><clipPath id="rp"><path d="M15 29 C6 22 1.5 15 1.5 9.5 C1.5 3.5 8 0.8 14.5 0.8 C21 0.8 27.5 3.5 27.5 9.5 C27.5 15 23 22 15 29 Z"/></clipPath></defs><g clip-path="url(#rp)"><rect x="0" y="0" width="30" height="30" fill="#5cb83c"/><path d="M0 0 H30 V9 Q18 1 4 8 L0 10 Z" fill="#3a9ad9"/><path d="M10 7 Q20 4 30 10 V30 H16 Q15 15 10 7 Z" fill="#b87060"/><path d="M4 8 Q18 1 30 9.5 L30 11 Q20 4.5 10.5 7.5 Q15 15 15.5 30 L14 30 Q13.5 15 8 8.2 Z" fill="#f2f2f2"/></g></svg>
<svg class="r" style="left:1609px;top:1049px" width="19" height="12" viewBox="0 0 19 12"><path d="M1.5 10 L9.5 2 L17.5 10" fill="none" stroke="#fff" stroke-width="1.3"/></svg>
<svg class="r" style="left:1637px;top:1045px" width="22" height="20" viewBox="0 0 22 20"><path d="M2 9 L20 2 L16 16 L10 12 Z" fill="#fff"/><circle cx="5.5" cy="16" r="2.8" fill="#777"/></svg>
<svg class="r" style="left:1667px;top:1044px" width="24" height="22" viewBox="0 0 24 22"><path d="M2 8 H6 L11 3.5 V18.5 L6 14 H2 Z" fill="none" stroke="#fff" stroke-width="1.1"/><path d="M14 8 Q16 11 14 14 M17 5 Q21 11 17 17 M20 2 Q26 11 20 20" fill="none" stroke="#fff" stroke-width="1.1"/></svg>
<svg class="r" style="left:1699px;top:1044px" width="20" height="20" viewBox="0 0 20 20"><path d="M2.3 17.5 A13 13 0 0 1 15.3 4.5 M6.8 17.5 A8.5 8.5 0 0 1 15.3 9 M11 17.5 A4.3 4.3 0 0 1 15.3 13.2" fill="none" stroke="#fff" stroke-width="1.1"/><circle cx="15.3" cy="17" r="1.6" fill="#fff"/></svg>
<div class="t" style="left:1732px;top:1050px;font-size:13px;line-height:13px;color:#fff;transform:scaleY(1.16);transform-origin:0 11px;">&#1056;&#1059;&#1057;</div>
<div class="t" style="left:1611px;width:400px;text-align:center;top:1037px;font-size:14px;line-height:14px;color:#fff;transform:scaleY(1.16);transform-origin:0 12px;">10:02</div>
<div class="t" style="left:1611px;width:400px;text-align:center;top:1060px;font-size:14px;line-height:14px;color:#fff;transform:scaleY(1.16);transform-origin:0 12px;">24.02.2026</div>
<svg class="r" style="left:1868px;top:1044px" width="23" height="22" viewBox="0 0 23 22"><path d="M1 1 H20 V16 H12 L9 19 L8 16 H1 Z" fill="#fff"/><path d="M4.5 5 H16.5 M4.5 8.5 H16.5 M4.5 12 H12" stroke="#1c1c1c" stroke-width="1.1"/><circle cx="17" cy="17" r="4.5" fill="#1c1c1c" stroke="#fff" stroke-width="1"/><path d="M15 15 Q15 19.5 19.5 19" fill="none" stroke="#fff" stroke-width="1"/></svg>
<div class="r" style="left:1914px;top:1030px;width:1px;height:50px;background:#5c5c5c;"></div>
</body></html>
